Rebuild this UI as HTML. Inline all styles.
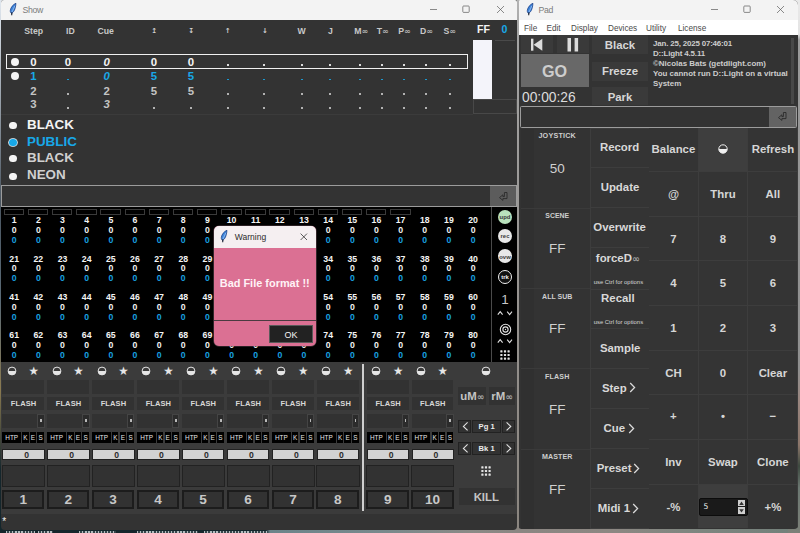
<!DOCTYPE html>
<html><head><meta charset="utf-8"><title>D::Light</title>
<style>
html,body{margin:0;padding:0;}
body{width:800px;height:533px;overflow:hidden;position:relative;background:#5f665f;font-family:"Liberation Sans",sans-serif;font-weight:bold;}
div,svg.ab{position:absolute;box-sizing:border-box;}
.t{width:120px;height:20px;line-height:20px;text-align:center;white-space:nowrap;}
.tl{height:20px;line-height:20px;white-space:nowrap;}
.seg{font-family:"Liberation Sans",sans-serif;font-weight:normal;}
</style></head><body>

<div style="left:0px;top:500px;width:520px;height:33px;background:linear-gradient(90deg,#14262c 0,#14262c 266px,#6c848a 270px,#78898c 380px,#8a8a86 470px,#8b8682 520px);"></div>
<div style="left:517px;top:500px;width:283px;height:33px;background:linear-gradient(90deg,#8b8682 0,#8c8782 35%,#7f8680 60%,#72807a 100%);"></div>
<div style="left:788px;top:0px;width:12px;height:533px;background:linear-gradient(180deg,#e9e9e9 0,#e4e4e4 34px,#9a9a9a 40px,#8f8f8f 370px,#9a8680 400px,#8c766a 445px,#3e4a40 466px,#6c7872 488px,#7c8078 533px);"></div>
<div style="left:0px;top:0px;width:8px;height:533px;background:linear-gradient(180deg,#dfe6ee 0,#cfd6de 30px,#4a5560 200px,#5a6a76 300px,#8a7a50 390px,#14262c 470px);"></div>
<div style="left:6px;top:530.6px;width:29px;height:3px;background:repeating-linear-gradient(90deg,rgba(230,238,240,.75) 0,rgba(230,238,240,.75) 1.3px,rgba(230,238,240,.15) 1.3px,rgba(230,238,240,.15) 3.1px);"></div>
<div style="left:38px;top:530.6px;width:15px;height:3px;background:repeating-linear-gradient(90deg,rgba(230,238,240,.75) 0,rgba(230,238,240,.75) 1.3px,rgba(230,238,240,.15) 1.3px,rgba(230,238,240,.15) 3.1px);"></div>
<div style="left:79px;top:530.6px;width:37px;height:3px;background:repeating-linear-gradient(90deg,rgba(230,238,240,.75) 0,rgba(230,238,240,.75) 1.3px,rgba(230,238,240,.15) 1.3px,rgba(230,238,240,.15) 3.1px);"></div>
<div style="left:137px;top:530.6px;width:61px;height:3px;background:repeating-linear-gradient(90deg,rgba(230,238,240,.75) 0,rgba(230,238,240,.75) 1.3px,rgba(230,238,240,.15) 1.3px,rgba(230,238,240,.15) 3.1px);"></div>
<div style="left:204px;top:530.6px;width:63px;height:3px;background:repeating-linear-gradient(90deg,rgba(230,238,240,.75) 0,rgba(230,238,240,.75) 1.3px,rgba(230,238,240,.15) 1.3px,rgba(230,238,240,.15) 3.1px);"></div>
<div style="left:1px;top:0;width:516px;height:529.6px;background:#333;border-radius:3px 2px 4px 4px;overflow:hidden;">
<div style="left:0px;top:0px;width:516px;height:20.1px;background:#f3f3f3;"></div>
<svg class="ab" style="left:8px;top:3px" width="9" height="13" viewBox="0 0 9 13"><path d="M6.9 0.3C4.2 1.4 1.6 4.4 1.3 7.6C1.2 9 1.8 10 2.6 10.4C4.6 9.2 6.6 6.4 6.9 0.3Z" fill="#3f86dc" stroke="#1c3f86" stroke-width="0.8"/><path d="M2.9 9.2L5.8 3" stroke="#a9c9f2" stroke-width="0.7" fill="none"/><path d="M2.9 9.4L2.7 12.2" stroke="#101828" stroke-width="1.1" fill="none"/></svg>
<div class="tl" style="left:21.4px;top:0.25px;font-size:8.7px;color:#7c7c7c;font-weight:normal;letter-spacing:-0.3px;">Show</div>
<svg class="ab" style="left:420px;top:0" width="96" height="20" viewBox="0 0 96 20"><g stroke="#5a5a5a" stroke-width="0.7" fill="none"><path d="M9 9.5h7"/><rect x="41.8" y="6" width="6.4" height="6.4" rx="0.8"/><path d="M76 6l7 7M83 6l-7 7"/></g></svg>
<div class="t" style="left:-27.30px;top:21.25px;font-size:8.7px;color:#c8c8c8;">Step</div>
<div class="t" style="left:9.40px;top:21.25px;font-size:8.7px;color:#c8c8c8;">ID</div>
<div class="t" style="left:44.70px;top:21.25px;font-size:8.7px;color:#c8c8c8;">Cue</div>
<div class="t" style="left:93.30px;top:21.25px;font-size:7px;color:#d4d4d4;font-family:'DejaVu Sans',sans-serif;">↥</div>
<div class="t" style="left:130.30px;top:21.25px;font-size:7px;color:#d4d4d4;font-family:'DejaVu Sans',sans-serif;">↧</div>
<div class="t" style="left:166.70px;top:21.25px;font-size:7px;color:#d4d4d4;font-family:'DejaVu Sans',sans-serif;">↑</div>
<div class="t" style="left:204.00px;top:21.25px;font-size:7px;color:#d4d4d4;font-family:'DejaVu Sans',sans-serif;">↓</div>
<div class="t" style="left:240.50px;top:21.25px;font-size:8.7px;color:#c8c8c8;">W</div>
<div class="t" style="left:269.50px;top:21.25px;font-size:8.7px;color:#c8c8c8;">J</div>
<div class="t" style="left:300.30px;top:21.25px;font-size:8.7px;color:#c8c8c8;">M<span style="font-size:8px;font-weight:bold;font-family:'DejaVu Sans',sans-serif;color:#b4b4b4;position:relative;top:-0.4px">∞</span></div>
<div class="t" style="left:321.80px;top:21.25px;font-size:8.7px;color:#c8c8c8;">T<span style="font-size:8px;font-weight:bold;font-family:'DejaVu Sans',sans-serif;color:#b4b4b4;position:relative;top:-0.4px">∞</span></div>
<div class="t" style="left:343.50px;top:21.25px;font-size:8.7px;color:#c8c8c8;">P<span style="font-size:8px;font-weight:bold;font-family:'DejaVu Sans',sans-serif;color:#b4b4b4;position:relative;top:-0.4px">∞</span></div>
<div class="t" style="left:365.50px;top:21.25px;font-size:8.7px;color:#c8c8c8;">D<span style="font-size:8px;font-weight:bold;font-family:'DejaVu Sans',sans-serif;color:#b4b4b4;position:relative;top:-0.4px">∞</span></div>
<div class="t" style="left:388.80px;top:21.25px;font-size:8.7px;color:#c8c8c8;">S<span style="font-size:8px;font-weight:bold;font-family:'DejaVu Sans',sans-serif;color:#b4b4b4;position:relative;top:-0.4px">∞</span></div>
<div class="t" style="left:422.50px;top:19.25px;font-size:10.6px;color:#f4f4f4;">FF</div>
<div class="t" style="left:443.50px;top:19.25px;font-size:10.6px;color:#18a8e8;">0</div>
<div class="t" style="left:-27.50px;top:52.25px;font-size:11.4px;color:#f4f4f4;">0</div>
<div class="t" style="left:7.00px;top:52.25px;font-size:11.4px;color:#f4f4f4;">0</div>
<div class="t" style="left:45.60px;top:52.25px;font-size:11.4px;color:#f4f4f4;font-style:italic;">0</div>
<div class="t" style="left:93.00px;top:52.25px;font-size:11.4px;color:#f4f4f4;">0</div>
<div class="t" style="left:130.00px;top:52.25px;font-size:11.4px;color:#f4f4f4;">0</div>
<div style="left:226.25px;top:64.35px;width:1.5px;height:1.5px;background:#f4f4f4;opacity:.88;"></div>
<div style="left:262.25px;top:64.35px;width:1.5px;height:1.5px;background:#f4f4f4;opacity:.88;"></div>
<div style="left:300.25px;top:64.35px;width:1.5px;height:1.5px;background:#f4f4f4;opacity:.88;"></div>
<div style="left:328.25px;top:64.35px;width:1.5px;height:1.5px;background:#f4f4f4;opacity:.88;"></div>
<div style="left:358.25px;top:64.35px;width:1.5px;height:1.5px;background:#f4f4f4;opacity:.88;"></div>
<div style="left:380.25px;top:64.35px;width:1.5px;height:1.5px;background:#f4f4f4;opacity:.88;"></div>
<div style="left:402.25px;top:64.35px;width:1.5px;height:1.5px;background:#f4f4f4;opacity:.88;"></div>
<div style="left:424.25px;top:64.35px;width:1.5px;height:1.5px;background:#f4f4f4;opacity:.88;"></div>
<div style="left:448.25px;top:64.35px;width:1.5px;height:1.5px;background:#f4f4f4;opacity:.88;"></div>
<div class="t" style="left:-27.50px;top:66.25px;font-size:11.4px;color:#18a8e8;">1</div>
<div style="left:66.25px;top:78.75px;width:1.5px;height:1.5px;background:#18a8e8;opacity:.88;"></div>
<div class="t" style="left:45.60px;top:66.25px;font-size:11.4px;color:#18a8e8;font-style:italic;">0</div>
<div class="t" style="left:93.00px;top:66.25px;font-size:11.4px;color:#18a8e8;">5</div>
<div class="t" style="left:130.00px;top:66.25px;font-size:11.4px;color:#18a8e8;">5</div>
<div style="left:226.25px;top:78.75px;width:1.5px;height:1.5px;background:#18a8e8;opacity:.88;"></div>
<div style="left:262.25px;top:78.75px;width:1.5px;height:1.5px;background:#18a8e8;opacity:.88;"></div>
<div style="left:300.25px;top:78.75px;width:1.5px;height:1.5px;background:#18a8e8;opacity:.88;"></div>
<div style="left:328.25px;top:78.75px;width:1.5px;height:1.5px;background:#18a8e8;opacity:.88;"></div>
<div style="left:358.25px;top:78.75px;width:1.5px;height:1.5px;background:#18a8e8;opacity:.88;"></div>
<div style="left:380.25px;top:78.75px;width:1.5px;height:1.5px;background:#18a8e8;opacity:.88;"></div>
<div style="left:402.25px;top:78.75px;width:1.5px;height:1.5px;background:#18a8e8;opacity:.88;"></div>
<div style="left:424.25px;top:78.75px;width:1.5px;height:1.5px;background:#18a8e8;opacity:.88;"></div>
<div style="left:448.25px;top:78.75px;width:1.5px;height:1.5px;background:#18a8e8;opacity:.88;"></div>
<div class="t" style="left:-27.50px;top:81.25px;font-size:11.4px;color:#c4c4c4;">2</div>
<div style="left:66.25px;top:93.05px;width:1.5px;height:1.5px;background:#c4c4c4;opacity:.88;"></div>
<div class="t" style="left:45.60px;top:81.25px;font-size:11.4px;color:#c4c4c4;">2</div>
<div class="t" style="left:93.00px;top:81.25px;font-size:11.4px;color:#c4c4c4;">5</div>
<div class="t" style="left:130.00px;top:81.25px;font-size:11.4px;color:#c4c4c4;">5</div>
<div style="left:226.25px;top:93.05px;width:1.5px;height:1.5px;background:#c4c4c4;opacity:.88;"></div>
<div style="left:262.25px;top:93.05px;width:1.5px;height:1.5px;background:#c4c4c4;opacity:.88;"></div>
<div style="left:300.25px;top:93.05px;width:1.5px;height:1.5px;background:#c4c4c4;opacity:.88;"></div>
<div style="left:328.25px;top:93.05px;width:1.5px;height:1.5px;background:#c4c4c4;opacity:.88;"></div>
<div style="left:358.25px;top:93.05px;width:1.5px;height:1.5px;background:#c4c4c4;opacity:.88;"></div>
<div style="left:380.25px;top:93.05px;width:1.5px;height:1.5px;background:#c4c4c4;opacity:.88;"></div>
<div style="left:402.25px;top:93.05px;width:1.5px;height:1.5px;background:#c4c4c4;opacity:.88;"></div>
<div style="left:424.25px;top:93.05px;width:1.5px;height:1.5px;background:#c4c4c4;opacity:.88;"></div>
<div style="left:448.25px;top:93.05px;width:1.5px;height:1.5px;background:#c4c4c4;opacity:.88;"></div>
<div class="t" style="left:-27.50px;top:94.25px;font-size:11.4px;color:#c4c4c4;">3</div>
<div style="left:66.25px;top:107.25px;width:1.5px;height:1.5px;background:#c4c4c4;opacity:.88;"></div>
<div class="t" style="left:45.60px;top:94.25px;font-size:11.4px;color:#c4c4c4;font-style:italic;">3</div>
<div style="left:152.25px;top:107.25px;width:1.5px;height:1.5px;background:#c4c4c4;opacity:.88;"></div>
<div style="left:189.25px;top:107.25px;width:1.5px;height:1.5px;background:#c4c4c4;opacity:.88;"></div>
<div style="left:226.25px;top:107.25px;width:1.5px;height:1.5px;background:#c4c4c4;opacity:.88;"></div>
<div style="left:262.25px;top:107.25px;width:1.5px;height:1.5px;background:#c4c4c4;opacity:.88;"></div>
<div style="left:300.25px;top:107.25px;width:1.5px;height:1.5px;background:#c4c4c4;opacity:.88;"></div>
<div style="left:328.25px;top:107.25px;width:1.5px;height:1.5px;background:#c4c4c4;opacity:.88;"></div>
<div style="left:358.25px;top:107.25px;width:1.5px;height:1.5px;background:#c4c4c4;opacity:.88;"></div>
<div style="left:380.25px;top:107.25px;width:1.5px;height:1.5px;background:#c4c4c4;opacity:.88;"></div>
<div style="left:402.25px;top:107.25px;width:1.5px;height:1.5px;background:#c4c4c4;opacity:.88;"></div>
<div style="left:424.25px;top:107.25px;width:1.5px;height:1.5px;background:#c4c4c4;opacity:.88;"></div>
<div style="left:448.25px;top:107.25px;width:1.5px;height:1.5px;background:#c4c4c4;opacity:.88;"></div>
<div style="left:5px;top:54px;width:462px;height:15px;border:1px solid #f0f0f0;"></div>
<div style="left:9.7px;top:57.7px;width:8px;height:8px;background:#f4f4f4;border-radius:50%;"></div>
<div style="left:9.7px;top:72.2px;width:8px;height:8px;background:#f4f4f4;border-radius:50%;"></div>
<div style="left:472.4px;top:40px;width:19.1px;height:58.5px;background:#f4f4fa;"></div>
<div style="left:493.5px;top:40px;width:20px;height:1px;background:#4a4a4a;"></div>
<div style="left:472px;top:99px;width:44px;height:14.5px;border:1px solid #484848;"></div>
<div style="left:0px;top:113.5px;width:472px;height:1px;background:#3b3b3b;"></div>
<div class="tl" style="left:26px;top:114.75px;font-size:13.4px;color:#f4f4f4;">BLACK</div>
<div style="left:8.3px;top:122.10000000000001px;width:7.4px;height:7.4px;background:#f4f4f4;border-radius:50%;"></div>
<div class="tl" style="left:26px;top:131.75px;font-size:13.4px;color:#18a8e8;">PUBLIC</div>
<div style="left:8.3px;top:139.1px;width:7.4px;height:7.4px;background:#18a8e8;border-radius:50%;box-shadow:0 0 0 0.8px #e8f4fa;"></div>
<div class="tl" style="left:26px;top:147.75px;font-size:13.4px;color:#d0d0d0;">BLACK</div>
<div style="left:8.3px;top:155.1px;width:7.4px;height:7.4px;background:#f4f4f4;border-radius:50%;"></div>
<div class="tl" style="left:26px;top:164.75px;font-size:13.4px;color:#d0d0d0;">NEON</div>
<div style="left:8.3px;top:172.6px;width:7.4px;height:7.4px;background:#f4f4f4;border-radius:50%;"></div>
<div style="left:0px;top:185px;width:516px;height:21.5px;background:#333;border:1px solid #9c9c9c;"></div>
<div style="left:488.6px;top:186px;width:26.4px;height:19.5px;background:#5c5c5c;"></div>
<svg class="ab" style="left:498.3px;top:191.6px" width="9" height="9" viewBox="0 0 9 9"><path d="M5.4 0.5H8V6.6H3.9V8.4L0.5 5.6L3.9 2.8V4.6H5.4Z" fill="none" stroke="#2a2a2a" stroke-width="0.9" stroke-linejoin="round"/></svg>
<div style="left:0px;top:206.5px;width:516px;height:155.5px;background:#000;"></div>
<div style="left:490.3px;top:206.5px;width:1px;height:155.5px;background:#4a4a4a;"></div>
<div style="left:2.8px;top:208.7px;width:20.4px;height:6.2px;border:1px solid #3a3a3a;"></div>
<div style="left:26.95px;top:208.7px;width:20.4px;height:6.2px;border:1px solid #3a3a3a;"></div>
<div style="left:51.099999999999994px;top:208.7px;width:20.4px;height:6.2px;border:1px solid #3a3a3a;"></div>
<div style="left:75.24999999999999px;top:208.7px;width:20.4px;height:6.2px;border:1px solid #3a3a3a;"></div>
<div style="left:99.39999999999999px;top:208.7px;width:20.4px;height:6.2px;border:1px solid #3a3a3a;"></div>
<div style="left:123.55px;top:208.7px;width:20.4px;height:6.2px;border:1px solid #3a3a3a;"></div>
<div style="left:147.7px;top:208.7px;width:20.4px;height:6.2px;border:1px solid #3a3a3a;"></div>
<div style="left:171.85px;top:208.7px;width:20.4px;height:6.2px;border:1px solid #3a3a3a;"></div>
<div style="left:196.0px;top:208.7px;width:20.4px;height:6.2px;border:1px solid #3a3a3a;"></div>
<div style="left:220.15px;top:208.7px;width:20.4px;height:6.2px;border:1px solid #3a3a3a;"></div>
<div style="left:244.3px;top:208.7px;width:20.4px;height:6.2px;border:1px solid #3a3a3a;"></div>
<div style="left:268.45px;top:208.7px;width:20.4px;height:6.2px;border:1px solid #3a3a3a;"></div>
<div style="left:292.59999999999997px;top:208.7px;width:20.4px;height:6.2px;border:1px solid #3a3a3a;"></div>
<div style="left:316.75px;top:208.7px;width:20.4px;height:6.2px;border:1px solid #3a3a3a;"></div>
<div style="left:340.9px;top:208.7px;width:20.4px;height:6.2px;border:1px solid #3a3a3a;"></div>
<div style="left:365.05px;top:208.7px;width:20.4px;height:6.2px;border:1px solid #3a3a3a;"></div>
<div style="left:389.2px;top:208.7px;width:20.4px;height:6.2px;border:1px solid #3a3a3a;"></div>
<div class="t" style="left:-46.80px;top:210.25px;font-size:8.7px;color:#f4f4f4;">1</div>
<div class="t" style="left:-46.80px;top:220.25px;font-size:8.7px;color:#f4f4f4;">0</div>
<div class="t" style="left:-46.80px;top:230.25px;font-size:8.7px;color:#18a0e0;">0</div>
<div class="t" style="left:-22.65px;top:210.25px;font-size:8.7px;color:#f4f4f4;">2</div>
<div class="t" style="left:-22.65px;top:220.25px;font-size:8.7px;color:#f4f4f4;">0</div>
<div class="t" style="left:-22.65px;top:230.25px;font-size:8.7px;color:#18a0e0;">0</div>
<div class="t" style="left:1.50px;top:210.25px;font-size:8.7px;color:#f4f4f4;">3</div>
<div class="t" style="left:1.50px;top:220.25px;font-size:8.7px;color:#f4f4f4;">0</div>
<div class="t" style="left:1.50px;top:230.25px;font-size:8.7px;color:#18a0e0;">0</div>
<div class="t" style="left:25.65px;top:210.25px;font-size:8.7px;color:#f4f4f4;">4</div>
<div class="t" style="left:25.65px;top:220.25px;font-size:8.7px;color:#f4f4f4;">0</div>
<div class="t" style="left:25.65px;top:230.25px;font-size:8.7px;color:#18a0e0;">0</div>
<div class="t" style="left:49.80px;top:210.25px;font-size:8.7px;color:#f4f4f4;">5</div>
<div class="t" style="left:49.80px;top:220.25px;font-size:8.7px;color:#f4f4f4;">0</div>
<div class="t" style="left:49.80px;top:230.25px;font-size:8.7px;color:#18a0e0;">0</div>
<div class="t" style="left:73.95px;top:210.25px;font-size:8.7px;color:#f4f4f4;">6</div>
<div class="t" style="left:73.95px;top:220.25px;font-size:8.7px;color:#f4f4f4;">0</div>
<div class="t" style="left:73.95px;top:230.25px;font-size:8.7px;color:#18a0e0;">0</div>
<div class="t" style="left:98.10px;top:210.25px;font-size:8.7px;color:#f4f4f4;">7</div>
<div class="t" style="left:98.10px;top:220.25px;font-size:8.7px;color:#f4f4f4;">0</div>
<div class="t" style="left:98.10px;top:230.25px;font-size:8.7px;color:#18a0e0;">0</div>
<div class="t" style="left:122.25px;top:210.25px;font-size:8.7px;color:#f4f4f4;">8</div>
<div class="t" style="left:122.25px;top:220.25px;font-size:8.7px;color:#f4f4f4;">0</div>
<div class="t" style="left:122.25px;top:230.25px;font-size:8.7px;color:#18a0e0;">0</div>
<div class="t" style="left:146.40px;top:210.25px;font-size:8.7px;color:#f4f4f4;">9</div>
<div class="t" style="left:146.40px;top:220.25px;font-size:8.7px;color:#f4f4f4;">0</div>
<div class="t" style="left:146.40px;top:230.25px;font-size:8.7px;color:#18a0e0;">0</div>
<div class="t" style="left:170.55px;top:210.25px;font-size:8.7px;color:#f4f4f4;">10</div>
<div class="t" style="left:170.55px;top:220.25px;font-size:8.7px;color:#f4f4f4;">0</div>
<div class="t" style="left:170.55px;top:230.25px;font-size:8.7px;color:#18a0e0;">0</div>
<div class="t" style="left:194.70px;top:210.25px;font-size:8.7px;color:#f4f4f4;">11</div>
<div class="t" style="left:194.70px;top:220.25px;font-size:8.7px;color:#f4f4f4;">0</div>
<div class="t" style="left:194.70px;top:230.25px;font-size:8.7px;color:#18a0e0;">0</div>
<div class="t" style="left:218.85px;top:210.25px;font-size:8.7px;color:#f4f4f4;">12</div>
<div class="t" style="left:218.85px;top:220.25px;font-size:8.7px;color:#f4f4f4;">0</div>
<div class="t" style="left:218.85px;top:230.25px;font-size:8.7px;color:#18a0e0;">0</div>
<div class="t" style="left:243.00px;top:210.25px;font-size:8.7px;color:#f4f4f4;">13</div>
<div class="t" style="left:243.00px;top:220.25px;font-size:8.7px;color:#f4f4f4;">0</div>
<div class="t" style="left:243.00px;top:230.25px;font-size:8.7px;color:#18a0e0;">0</div>
<div class="t" style="left:267.15px;top:210.25px;font-size:8.7px;color:#f4f4f4;">14</div>
<div class="t" style="left:267.15px;top:220.25px;font-size:8.7px;color:#f4f4f4;">0</div>
<div class="t" style="left:267.15px;top:230.25px;font-size:8.7px;color:#18a0e0;">0</div>
<div class="t" style="left:291.30px;top:210.25px;font-size:8.7px;color:#f4f4f4;">15</div>
<div class="t" style="left:291.30px;top:220.25px;font-size:8.7px;color:#f4f4f4;">0</div>
<div class="t" style="left:291.30px;top:230.25px;font-size:8.7px;color:#18a0e0;">0</div>
<div class="t" style="left:315.45px;top:210.25px;font-size:8.7px;color:#f4f4f4;">16</div>
<div class="t" style="left:315.45px;top:220.25px;font-size:8.7px;color:#f4f4f4;">0</div>
<div class="t" style="left:315.45px;top:230.25px;font-size:8.7px;color:#18a0e0;">0</div>
<div class="t" style="left:339.60px;top:210.25px;font-size:8.7px;color:#f4f4f4;">17</div>
<div class="t" style="left:339.60px;top:220.25px;font-size:8.7px;color:#f4f4f4;">0</div>
<div class="t" style="left:339.60px;top:230.25px;font-size:8.7px;color:#18a0e0;">0</div>
<div class="t" style="left:363.75px;top:210.25px;font-size:8.7px;color:#f4f4f4;">18</div>
<div class="t" style="left:363.75px;top:220.25px;font-size:8.7px;color:#f4f4f4;">0</div>
<div class="t" style="left:363.75px;top:230.25px;font-size:8.7px;color:#18a0e0;">0</div>
<div class="t" style="left:387.90px;top:210.25px;font-size:8.7px;color:#f4f4f4;">19</div>
<div class="t" style="left:387.90px;top:220.25px;font-size:8.7px;color:#f4f4f4;">0</div>
<div class="t" style="left:387.90px;top:230.25px;font-size:8.7px;color:#18a0e0;">0</div>
<div class="t" style="left:412.05px;top:210.25px;font-size:8.7px;color:#f4f4f4;">20</div>
<div class="t" style="left:412.05px;top:220.25px;font-size:8.7px;color:#f4f4f4;">0</div>
<div class="t" style="left:412.05px;top:230.25px;font-size:8.7px;color:#18a0e0;">0</div>
<div class="t" style="left:-46.80px;top:249.25px;font-size:8.7px;color:#f4f4f4;">21</div>
<div class="t" style="left:-46.80px;top:258.25px;font-size:8.7px;color:#f4f4f4;">0</div>
<div class="t" style="left:-46.80px;top:268.25px;font-size:8.7px;color:#18a0e0;">0</div>
<div class="t" style="left:-22.65px;top:249.25px;font-size:8.7px;color:#f4f4f4;">22</div>
<div class="t" style="left:-22.65px;top:258.25px;font-size:8.7px;color:#f4f4f4;">0</div>
<div class="t" style="left:-22.65px;top:268.25px;font-size:8.7px;color:#18a0e0;">0</div>
<div class="t" style="left:1.50px;top:249.25px;font-size:8.7px;color:#f4f4f4;">23</div>
<div class="t" style="left:1.50px;top:258.25px;font-size:8.7px;color:#f4f4f4;">0</div>
<div class="t" style="left:1.50px;top:268.25px;font-size:8.7px;color:#18a0e0;">0</div>
<div class="t" style="left:25.65px;top:249.25px;font-size:8.7px;color:#f4f4f4;">24</div>
<div class="t" style="left:25.65px;top:258.25px;font-size:8.7px;color:#f4f4f4;">0</div>
<div class="t" style="left:25.65px;top:268.25px;font-size:8.7px;color:#18a0e0;">0</div>
<div class="t" style="left:49.80px;top:249.25px;font-size:8.7px;color:#f4f4f4;">25</div>
<div class="t" style="left:49.80px;top:258.25px;font-size:8.7px;color:#f4f4f4;">0</div>
<div class="t" style="left:49.80px;top:268.25px;font-size:8.7px;color:#18a0e0;">0</div>
<div class="t" style="left:73.95px;top:249.25px;font-size:8.7px;color:#f4f4f4;">26</div>
<div class="t" style="left:73.95px;top:258.25px;font-size:8.7px;color:#f4f4f4;">0</div>
<div class="t" style="left:73.95px;top:268.25px;font-size:8.7px;color:#18a0e0;">0</div>
<div class="t" style="left:98.10px;top:249.25px;font-size:8.7px;color:#f4f4f4;">27</div>
<div class="t" style="left:98.10px;top:258.25px;font-size:8.7px;color:#f4f4f4;">0</div>
<div class="t" style="left:98.10px;top:268.25px;font-size:8.7px;color:#18a0e0;">0</div>
<div class="t" style="left:122.25px;top:249.25px;font-size:8.7px;color:#f4f4f4;">28</div>
<div class="t" style="left:122.25px;top:258.25px;font-size:8.7px;color:#f4f4f4;">0</div>
<div class="t" style="left:122.25px;top:268.25px;font-size:8.7px;color:#18a0e0;">0</div>
<div class="t" style="left:146.40px;top:249.25px;font-size:8.7px;color:#f4f4f4;">29</div>
<div class="t" style="left:146.40px;top:258.25px;font-size:8.7px;color:#f4f4f4;">0</div>
<div class="t" style="left:146.40px;top:268.25px;font-size:8.7px;color:#18a0e0;">0</div>
<div class="t" style="left:170.55px;top:249.25px;font-size:8.7px;color:#f4f4f4;">30</div>
<div class="t" style="left:170.55px;top:258.25px;font-size:8.7px;color:#f4f4f4;">0</div>
<div class="t" style="left:170.55px;top:268.25px;font-size:8.7px;color:#18a0e0;">0</div>
<div class="t" style="left:194.70px;top:249.25px;font-size:8.7px;color:#f4f4f4;">31</div>
<div class="t" style="left:194.70px;top:258.25px;font-size:8.7px;color:#f4f4f4;">0</div>
<div class="t" style="left:194.70px;top:268.25px;font-size:8.7px;color:#18a0e0;">0</div>
<div class="t" style="left:218.85px;top:249.25px;font-size:8.7px;color:#f4f4f4;">32</div>
<div class="t" style="left:218.85px;top:258.25px;font-size:8.7px;color:#f4f4f4;">0</div>
<div class="t" style="left:218.85px;top:268.25px;font-size:8.7px;color:#18a0e0;">0</div>
<div class="t" style="left:243.00px;top:249.25px;font-size:8.7px;color:#f4f4f4;">33</div>
<div class="t" style="left:243.00px;top:258.25px;font-size:8.7px;color:#f4f4f4;">0</div>
<div class="t" style="left:243.00px;top:268.25px;font-size:8.7px;color:#18a0e0;">0</div>
<div class="t" style="left:267.15px;top:249.25px;font-size:8.7px;color:#f4f4f4;">34</div>
<div class="t" style="left:267.15px;top:258.25px;font-size:8.7px;color:#f4f4f4;">0</div>
<div class="t" style="left:267.15px;top:268.25px;font-size:8.7px;color:#18a0e0;">0</div>
<div class="t" style="left:291.30px;top:249.25px;font-size:8.7px;color:#f4f4f4;">35</div>
<div class="t" style="left:291.30px;top:258.25px;font-size:8.7px;color:#f4f4f4;">0</div>
<div class="t" style="left:291.30px;top:268.25px;font-size:8.7px;color:#18a0e0;">0</div>
<div class="t" style="left:315.45px;top:249.25px;font-size:8.7px;color:#f4f4f4;">36</div>
<div class="t" style="left:315.45px;top:258.25px;font-size:8.7px;color:#f4f4f4;">0</div>
<div class="t" style="left:315.45px;top:268.25px;font-size:8.7px;color:#18a0e0;">0</div>
<div class="t" style="left:339.60px;top:249.25px;font-size:8.7px;color:#f4f4f4;">37</div>
<div class="t" style="left:339.60px;top:258.25px;font-size:8.7px;color:#f4f4f4;">0</div>
<div class="t" style="left:339.60px;top:268.25px;font-size:8.7px;color:#18a0e0;">0</div>
<div class="t" style="left:363.75px;top:249.25px;font-size:8.7px;color:#f4f4f4;">38</div>
<div class="t" style="left:363.75px;top:258.25px;font-size:8.7px;color:#f4f4f4;">0</div>
<div class="t" style="left:363.75px;top:268.25px;font-size:8.7px;color:#18a0e0;">0</div>
<div class="t" style="left:387.90px;top:249.25px;font-size:8.7px;color:#f4f4f4;">39</div>
<div class="t" style="left:387.90px;top:258.25px;font-size:8.7px;color:#f4f4f4;">0</div>
<div class="t" style="left:387.90px;top:268.25px;font-size:8.7px;color:#18a0e0;">0</div>
<div class="t" style="left:412.05px;top:249.25px;font-size:8.7px;color:#f4f4f4;">40</div>
<div class="t" style="left:412.05px;top:258.25px;font-size:8.7px;color:#f4f4f4;">0</div>
<div class="t" style="left:412.05px;top:268.25px;font-size:8.7px;color:#18a0e0;">0</div>
<div class="t" style="left:-46.80px;top:287.25px;font-size:8.7px;color:#f4f4f4;">41</div>
<div class="t" style="left:-46.80px;top:297.25px;font-size:8.7px;color:#f4f4f4;">0</div>
<div class="t" style="left:-46.80px;top:307.25px;font-size:8.7px;color:#18a0e0;">0</div>
<div class="t" style="left:-22.65px;top:287.25px;font-size:8.7px;color:#f4f4f4;">42</div>
<div class="t" style="left:-22.65px;top:297.25px;font-size:8.7px;color:#f4f4f4;">0</div>
<div class="t" style="left:-22.65px;top:307.25px;font-size:8.7px;color:#18a0e0;">0</div>
<div class="t" style="left:1.50px;top:287.25px;font-size:8.7px;color:#f4f4f4;">43</div>
<div class="t" style="left:1.50px;top:297.25px;font-size:8.7px;color:#f4f4f4;">0</div>
<div class="t" style="left:1.50px;top:307.25px;font-size:8.7px;color:#18a0e0;">0</div>
<div class="t" style="left:25.65px;top:287.25px;font-size:8.7px;color:#f4f4f4;">44</div>
<div class="t" style="left:25.65px;top:297.25px;font-size:8.7px;color:#f4f4f4;">0</div>
<div class="t" style="left:25.65px;top:307.25px;font-size:8.7px;color:#18a0e0;">0</div>
<div class="t" style="left:49.80px;top:287.25px;font-size:8.7px;color:#f4f4f4;">45</div>
<div class="t" style="left:49.80px;top:297.25px;font-size:8.7px;color:#f4f4f4;">0</div>
<div class="t" style="left:49.80px;top:307.25px;font-size:8.7px;color:#18a0e0;">0</div>
<div class="t" style="left:73.95px;top:287.25px;font-size:8.7px;color:#f4f4f4;">46</div>
<div class="t" style="left:73.95px;top:297.25px;font-size:8.7px;color:#f4f4f4;">0</div>
<div class="t" style="left:73.95px;top:307.25px;font-size:8.7px;color:#18a0e0;">0</div>
<div class="t" style="left:98.10px;top:287.25px;font-size:8.7px;color:#f4f4f4;">47</div>
<div class="t" style="left:98.10px;top:297.25px;font-size:8.7px;color:#f4f4f4;">0</div>
<div class="t" style="left:98.10px;top:307.25px;font-size:8.7px;color:#18a0e0;">0</div>
<div class="t" style="left:122.25px;top:287.25px;font-size:8.7px;color:#f4f4f4;">48</div>
<div class="t" style="left:122.25px;top:297.25px;font-size:8.7px;color:#f4f4f4;">0</div>
<div class="t" style="left:122.25px;top:307.25px;font-size:8.7px;color:#18a0e0;">0</div>
<div class="t" style="left:146.40px;top:287.25px;font-size:8.7px;color:#f4f4f4;">49</div>
<div class="t" style="left:146.40px;top:297.25px;font-size:8.7px;color:#f4f4f4;">0</div>
<div class="t" style="left:146.40px;top:307.25px;font-size:8.7px;color:#18a0e0;">0</div>
<div class="t" style="left:170.55px;top:287.25px;font-size:8.7px;color:#f4f4f4;">50</div>
<div class="t" style="left:170.55px;top:297.25px;font-size:8.7px;color:#f4f4f4;">0</div>
<div class="t" style="left:170.55px;top:307.25px;font-size:8.7px;color:#18a0e0;">0</div>
<div class="t" style="left:194.70px;top:287.25px;font-size:8.7px;color:#f4f4f4;">51</div>
<div class="t" style="left:194.70px;top:297.25px;font-size:8.7px;color:#f4f4f4;">0</div>
<div class="t" style="left:194.70px;top:307.25px;font-size:8.7px;color:#18a0e0;">0</div>
<div class="t" style="left:218.85px;top:287.25px;font-size:8.7px;color:#f4f4f4;">52</div>
<div class="t" style="left:218.85px;top:297.25px;font-size:8.7px;color:#f4f4f4;">0</div>
<div class="t" style="left:218.85px;top:307.25px;font-size:8.7px;color:#18a0e0;">0</div>
<div class="t" style="left:243.00px;top:287.25px;font-size:8.7px;color:#f4f4f4;">53</div>
<div class="t" style="left:243.00px;top:297.25px;font-size:8.7px;color:#f4f4f4;">0</div>
<div class="t" style="left:243.00px;top:307.25px;font-size:8.7px;color:#18a0e0;">0</div>
<div class="t" style="left:267.15px;top:287.25px;font-size:8.7px;color:#f4f4f4;">54</div>
<div class="t" style="left:267.15px;top:297.25px;font-size:8.7px;color:#f4f4f4;">0</div>
<div class="t" style="left:267.15px;top:307.25px;font-size:8.7px;color:#18a0e0;">0</div>
<div class="t" style="left:291.30px;top:287.25px;font-size:8.7px;color:#f4f4f4;">55</div>
<div class="t" style="left:291.30px;top:297.25px;font-size:8.7px;color:#f4f4f4;">0</div>
<div class="t" style="left:291.30px;top:307.25px;font-size:8.7px;color:#18a0e0;">0</div>
<div class="t" style="left:315.45px;top:287.25px;font-size:8.7px;color:#f4f4f4;">56</div>
<div class="t" style="left:315.45px;top:297.25px;font-size:8.7px;color:#f4f4f4;">0</div>
<div class="t" style="left:315.45px;top:307.25px;font-size:8.7px;color:#18a0e0;">0</div>
<div class="t" style="left:339.60px;top:287.25px;font-size:8.7px;color:#f4f4f4;">57</div>
<div class="t" style="left:339.60px;top:297.25px;font-size:8.7px;color:#f4f4f4;">0</div>
<div class="t" style="left:339.60px;top:307.25px;font-size:8.7px;color:#18a0e0;">0</div>
<div class="t" style="left:363.75px;top:287.25px;font-size:8.7px;color:#f4f4f4;">58</div>
<div class="t" style="left:363.75px;top:297.25px;font-size:8.7px;color:#f4f4f4;">0</div>
<div class="t" style="left:363.75px;top:307.25px;font-size:8.7px;color:#18a0e0;">0</div>
<div class="t" style="left:387.90px;top:287.25px;font-size:8.7px;color:#f4f4f4;">59</div>
<div class="t" style="left:387.90px;top:297.25px;font-size:8.7px;color:#f4f4f4;">0</div>
<div class="t" style="left:387.90px;top:307.25px;font-size:8.7px;color:#18a0e0;">0</div>
<div class="t" style="left:412.05px;top:287.25px;font-size:8.7px;color:#f4f4f4;">60</div>
<div class="t" style="left:412.05px;top:297.25px;font-size:8.7px;color:#f4f4f4;">0</div>
<div class="t" style="left:412.05px;top:307.25px;font-size:8.7px;color:#18a0e0;">0</div>
<div class="t" style="left:-46.80px;top:325.25px;font-size:8.7px;color:#f4f4f4;">61</div>
<div class="t" style="left:-46.80px;top:335.25px;font-size:8.7px;color:#f4f4f4;">0</div>
<div class="t" style="left:-46.80px;top:345.25px;font-size:8.7px;color:#18a0e0;">0</div>
<div class="t" style="left:-22.65px;top:325.25px;font-size:8.7px;color:#f4f4f4;">62</div>
<div class="t" style="left:-22.65px;top:335.25px;font-size:8.7px;color:#f4f4f4;">0</div>
<div class="t" style="left:-22.65px;top:345.25px;font-size:8.7px;color:#18a0e0;">0</div>
<div class="t" style="left:1.50px;top:325.25px;font-size:8.7px;color:#f4f4f4;">63</div>
<div class="t" style="left:1.50px;top:335.25px;font-size:8.7px;color:#f4f4f4;">0</div>
<div class="t" style="left:1.50px;top:345.25px;font-size:8.7px;color:#18a0e0;">0</div>
<div class="t" style="left:25.65px;top:325.25px;font-size:8.7px;color:#f4f4f4;">64</div>
<div class="t" style="left:25.65px;top:335.25px;font-size:8.7px;color:#f4f4f4;">0</div>
<div class="t" style="left:25.65px;top:345.25px;font-size:8.7px;color:#18a0e0;">0</div>
<div class="t" style="left:49.80px;top:325.25px;font-size:8.7px;color:#f4f4f4;">65</div>
<div class="t" style="left:49.80px;top:335.25px;font-size:8.7px;color:#f4f4f4;">0</div>
<div class="t" style="left:49.80px;top:345.25px;font-size:8.7px;color:#18a0e0;">0</div>
<div class="t" style="left:73.95px;top:325.25px;font-size:8.7px;color:#f4f4f4;">66</div>
<div class="t" style="left:73.95px;top:335.25px;font-size:8.7px;color:#f4f4f4;">0</div>
<div class="t" style="left:73.95px;top:345.25px;font-size:8.7px;color:#18a0e0;">0</div>
<div class="t" style="left:98.10px;top:325.25px;font-size:8.7px;color:#f4f4f4;">67</div>
<div class="t" style="left:98.10px;top:335.25px;font-size:8.7px;color:#f4f4f4;">0</div>
<div class="t" style="left:98.10px;top:345.25px;font-size:8.7px;color:#18a0e0;">0</div>
<div class="t" style="left:122.25px;top:325.25px;font-size:8.7px;color:#f4f4f4;">68</div>
<div class="t" style="left:122.25px;top:335.25px;font-size:8.7px;color:#f4f4f4;">0</div>
<div class="t" style="left:122.25px;top:345.25px;font-size:8.7px;color:#18a0e0;">0</div>
<div class="t" style="left:146.40px;top:325.25px;font-size:8.7px;color:#f4f4f4;">69</div>
<div class="t" style="left:146.40px;top:335.25px;font-size:8.7px;color:#f4f4f4;">0</div>
<div class="t" style="left:146.40px;top:345.25px;font-size:8.7px;color:#18a0e0;">0</div>
<div class="t" style="left:170.55px;top:325.25px;font-size:8.7px;color:#f4f4f4;">70</div>
<div class="t" style="left:170.55px;top:335.25px;font-size:8.7px;color:#f4f4f4;">0</div>
<div class="t" style="left:170.55px;top:345.25px;font-size:8.7px;color:#18a0e0;">0</div>
<div class="t" style="left:194.70px;top:325.25px;font-size:8.7px;color:#f4f4f4;">71</div>
<div class="t" style="left:194.70px;top:335.25px;font-size:8.7px;color:#f4f4f4;">0</div>
<div class="t" style="left:194.70px;top:345.25px;font-size:8.7px;color:#18a0e0;">0</div>
<div class="t" style="left:218.85px;top:325.25px;font-size:8.7px;color:#f4f4f4;">72</div>
<div class="t" style="left:218.85px;top:335.25px;font-size:8.7px;color:#f4f4f4;">0</div>
<div class="t" style="left:218.85px;top:345.25px;font-size:8.7px;color:#18a0e0;">0</div>
<div class="t" style="left:243.00px;top:325.25px;font-size:8.7px;color:#f4f4f4;">73</div>
<div class="t" style="left:243.00px;top:335.25px;font-size:8.7px;color:#f4f4f4;">0</div>
<div class="t" style="left:243.00px;top:345.25px;font-size:8.7px;color:#18a0e0;">0</div>
<div class="t" style="left:267.15px;top:325.25px;font-size:8.7px;color:#f4f4f4;">74</div>
<div class="t" style="left:267.15px;top:335.25px;font-size:8.7px;color:#f4f4f4;">0</div>
<div class="t" style="left:267.15px;top:345.25px;font-size:8.7px;color:#18a0e0;">0</div>
<div class="t" style="left:291.30px;top:325.25px;font-size:8.7px;color:#f4f4f4;">75</div>
<div class="t" style="left:291.30px;top:335.25px;font-size:8.7px;color:#f4f4f4;">0</div>
<div class="t" style="left:291.30px;top:345.25px;font-size:8.7px;color:#18a0e0;">0</div>
<div class="t" style="left:315.45px;top:325.25px;font-size:8.7px;color:#f4f4f4;">76</div>
<div class="t" style="left:315.45px;top:335.25px;font-size:8.7px;color:#f4f4f4;">0</div>
<div class="t" style="left:315.45px;top:345.25px;font-size:8.7px;color:#18a0e0;">0</div>
<div class="t" style="left:339.60px;top:325.25px;font-size:8.7px;color:#f4f4f4;">77</div>
<div class="t" style="left:339.60px;top:335.25px;font-size:8.7px;color:#f4f4f4;">0</div>
<div class="t" style="left:339.60px;top:345.25px;font-size:8.7px;color:#18a0e0;">0</div>
<div class="t" style="left:363.75px;top:325.25px;font-size:8.7px;color:#f4f4f4;">78</div>
<div class="t" style="left:363.75px;top:335.25px;font-size:8.7px;color:#f4f4f4;">0</div>
<div class="t" style="left:363.75px;top:345.25px;font-size:8.7px;color:#18a0e0;">0</div>
<div class="t" style="left:387.90px;top:325.25px;font-size:8.7px;color:#f4f4f4;">79</div>
<div class="t" style="left:387.90px;top:335.25px;font-size:8.7px;color:#f4f4f4;">0</div>
<div class="t" style="left:387.90px;top:345.25px;font-size:8.7px;color:#18a0e0;">0</div>
<div class="t" style="left:412.05px;top:325.25px;font-size:8.7px;color:#f4f4f4;">80</div>
<div class="t" style="left:412.05px;top:335.25px;font-size:8.7px;color:#f4f4f4;">0</div>
<div class="t" style="left:412.05px;top:345.25px;font-size:8.7px;color:#18a0e0;">0</div>
<div style="left:497px;top:209.5px;width:14px;height:14px;background:#b9e2bd;border-radius:50%;"></div>
<div class="t" style="left:444.00px;top:207.25px;font-size:5.9px;color:#383838;">upd</div>
<div style="left:497px;top:229.2px;width:14px;height:14px;background:#e8e8e8;border-radius:50%;"></div>
<div class="t" style="left:444.00px;top:226.25px;font-size:5.9px;color:#383838;">rec</div>
<div style="left:497px;top:249.39999999999998px;width:14px;height:14px;background:#e8e8e8;border-radius:50%;"></div>
<div class="t" style="left:444.00px;top:247.25px;font-size:5.9px;color:#383838;">ovw</div>
<div style="left:497px;top:269.7px;width:14px;height:14px;background:#111;border-radius:50%;border:1.2px solid #f0f0f0;"></div>
<div class="t" style="left:444.00px;top:267.25px;font-size:5.9px;color:#f0f0f0;">trk</div>
<div class="t" style="left:444.00px;top:289.75px;font-size:13.4px;color:#c8c8c8;font-weight:normal;">1</div>
<svg class="ab" style="left:496.2px;top:310.2px" width="16" height="6" viewBox="0 0 16 6"><g stroke="#e0e0e0" stroke-width="1.1" fill="none"><path d="M0.8 4.6L3.2 1.6L5.6 4.6"/><path d="M10.2 1.6L12.6 4.6L15 1.6"/></g></svg>
<svg class="ab" style="left:497.5px;top:322.5px" width="13" height="13" viewBox="-6.5 -6.5 13 13"><circle r="5.2" fill="none" stroke="#e4e4e4" stroke-width="1.1"/><circle r="2.6" fill="none" stroke="#e4e4e4" stroke-width="1.1"/><circle r="0.7" fill="#e4e4e4"/></svg>
<svg class="ab" style="left:496.2px;top:338.3px" width="16" height="6" viewBox="0 0 16 6"><g stroke="#e0e0e0" stroke-width="1.1" fill="none"><path d="M0.8 4.6L3.2 1.6L5.6 4.6"/><path d="M10.2 1.6L12.6 4.6L15 1.6"/></g></svg>
<svg class="ab" style="left:497.3px;top:347.7px" width="14" height="14" viewBox="-7 -7 14 14"><rect x="-4.70" y="-4.70" width="2.2" height="2.2" rx="0.5" fill="#e4e4e4"/><rect x="-1.10" y="-4.70" width="2.2" height="2.2" rx="0.5" fill="#e4e4e4"/><rect x="2.50" y="-4.70" width="2.2" height="2.2" rx="0.5" fill="#e4e4e4"/><rect x="-4.70" y="-1.10" width="2.2" height="2.2" rx="0.5" fill="#e4e4e4"/><rect x="-1.10" y="-1.10" width="2.2" height="2.2" rx="0.5" fill="#e4e4e4"/><rect x="2.50" y="-1.10" width="2.2" height="2.2" rx="0.5" fill="#e4e4e4"/><rect x="-4.70" y="2.50" width="2.2" height="2.2" rx="0.5" fill="#e4e4e4"/><rect x="-1.10" y="2.50" width="2.2" height="2.2" rx="0.5" fill="#e4e4e4"/><rect x="2.50" y="2.50" width="2.2" height="2.2" rx="0.5" fill="#e4e4e4"/></svg>
<div style="left:0px;top:362px;width:516px;height:151.6px;background:#3b3b3b;"></div>
<svg class="ab" style="left:4.6px;top:365.0px" width="12" height="12" viewBox="-6 -6 12 12"><circle r="3.9" fill="none" stroke="#e6e6e6" stroke-width="1"/><path d="M-3.9 0 A3.9 3.9 0 0 0 3.9 0Z" fill="#e6e6e6"/></svg>
<div class="t" style="left:-27.40px;top:361.25px;font-size:11.6px;color:#e6e6e6;font-weight:normal;font-family:'DejaVu Sans',sans-serif;">★</div>
<div style="left:1.4px;top:380.3px;width:41.7px;height:13.3px;background:#323232;"></div>
<div style="left:1.4px;top:397.2px;width:41.7px;height:13.3px;background:#323232;"></div>
<div class="t" style="left:-37.45px;top:393.75px;font-size:7.5px;color:#d8d8d8;letter-spacing:0.1px;">FLASH</div>
<div style="left:1.4px;top:413.7px;width:41.7px;height:14px;background:#323232;"></div>
<div style="left:36.0px;top:413.9px;width:7.6px;height:13.8px;background:#2b2b2b;border:1px solid #444;"></div>
<div style="left:38.9px;top:419.3px;width:1.9px;height:2.9px;background:#b8b8b8;"></div>
<div style="left:1.4px;top:432.3px;width:18.6px;height:10.6px;background:#000;"></div>
<div class="t" style="left:-49.30px;top:427.75px;font-size:6.4px;color:#e8e8e8;font-weight:normal;">HTP</div>
<div style="left:21.4px;top:432.3px;width:6.2px;height:10.6px;background:#000;"></div>
<div class="t" style="left:-35.50px;top:427.75px;font-size:6.4px;color:#e8e8e8;font-weight:normal;">K</div>
<div style="left:28.799999999999997px;top:432.3px;width:6.2px;height:10.6px;background:#000;"></div>
<div class="t" style="left:-28.10px;top:427.75px;font-size:6.4px;color:#e8e8e8;font-weight:normal;">E</div>
<div style="left:36.4px;top:432.3px;width:6.6px;height:10.6px;background:#000;"></div>
<div class="t" style="left:-20.30px;top:427.75px;font-size:6.4px;color:#e8e8e8;font-weight:normal;">S</div>
<div style="left:1.4px;top:449.1px;width:42.300000000000004px;height:11.4px;background:#d2d2d2;border:1px solid #222;"></div>
<div class="t" style="left:-34.35px;top:445.25px;font-size:8.6px;color:#2a2a2a;">0</div>
<div style="left:0.7999999999999999px;top:465.2px;width:43.1px;height:21.8px;background:#323232;border:1px solid #222;"></div>
<div style="left:0.7999999999999999px;top:489.5px;width:42.7px;height:19.8px;background:#323232;border:2px solid #1c1c1c;"></div>
<div class="t" style="left:-37.75px;top:489.75px;font-size:13.6px;color:#c8c8c8;">1</div>
<svg class="ab" style="left:49.55px;top:365.0px" width="12" height="12" viewBox="-6 -6 12 12"><circle r="3.9" fill="none" stroke="#e6e6e6" stroke-width="1"/><path d="M-3.9 0 A3.9 3.9 0 0 0 3.9 0Z" fill="#e6e6e6"/></svg>
<div class="t" style="left:17.55px;top:361.25px;font-size:11.6px;color:#e6e6e6;font-weight:normal;font-family:'DejaVu Sans',sans-serif;">★</div>
<div style="left:46.35px;top:380.3px;width:41.7px;height:13.3px;background:#323232;"></div>
<div style="left:46.35px;top:397.2px;width:41.7px;height:13.3px;background:#323232;"></div>
<div class="t" style="left:7.50px;top:393.75px;font-size:7.5px;color:#d8d8d8;letter-spacing:0.1px;">FLASH</div>
<div style="left:46.35px;top:413.7px;width:41.7px;height:14px;background:#323232;"></div>
<div style="left:80.95px;top:413.9px;width:7.6px;height:13.8px;background:#2b2b2b;border:1px solid #444;"></div>
<div style="left:83.85px;top:419.3px;width:1.9px;height:2.9px;background:#b8b8b8;"></div>
<div style="left:46.35px;top:432.3px;width:18.6px;height:10.6px;background:#000;"></div>
<div class="t" style="left:-4.35px;top:427.75px;font-size:6.4px;color:#e8e8e8;font-weight:normal;">HTP</div>
<div style="left:66.35px;top:432.3px;width:6.2px;height:10.6px;background:#000;"></div>
<div class="t" style="left:9.45px;top:427.75px;font-size:6.4px;color:#e8e8e8;font-weight:normal;">K</div>
<div style="left:73.75px;top:432.3px;width:6.2px;height:10.6px;background:#000;"></div>
<div class="t" style="left:16.85px;top:427.75px;font-size:6.4px;color:#e8e8e8;font-weight:normal;">E</div>
<div style="left:81.35px;top:432.3px;width:6.6px;height:10.6px;background:#000;"></div>
<div class="t" style="left:24.65px;top:427.75px;font-size:6.4px;color:#e8e8e8;font-weight:normal;">S</div>
<div style="left:46.35px;top:449.1px;width:42.300000000000004px;height:11.4px;background:#d2d2d2;border:1px solid #222;"></div>
<div class="t" style="left:10.60px;top:445.25px;font-size:8.6px;color:#2a2a2a;">0</div>
<div style="left:45.75px;top:465.2px;width:43.1px;height:21.8px;background:#323232;border:1px solid #222;"></div>
<div style="left:45.75px;top:489.5px;width:42.7px;height:19.8px;background:#323232;border:2px solid #1c1c1c;"></div>
<div class="t" style="left:7.20px;top:489.75px;font-size:13.6px;color:#c8c8c8;">2</div>
<svg class="ab" style="left:94.50000000000001px;top:365.0px" width="12" height="12" viewBox="-6 -6 12 12"><circle r="3.9" fill="none" stroke="#e6e6e6" stroke-width="1"/><path d="M-3.9 0 A3.9 3.9 0 0 0 3.9 0Z" fill="#e6e6e6"/></svg>
<div class="t" style="left:62.50px;top:361.25px;font-size:11.6px;color:#e6e6e6;font-weight:normal;font-family:'DejaVu Sans',sans-serif;">★</div>
<div style="left:91.30000000000001px;top:380.3px;width:41.7px;height:13.3px;background:#323232;"></div>
<div style="left:91.30000000000001px;top:397.2px;width:41.7px;height:13.3px;background:#323232;"></div>
<div class="t" style="left:52.45px;top:393.75px;font-size:7.5px;color:#d8d8d8;letter-spacing:0.1px;">FLASH</div>
<div style="left:91.30000000000001px;top:413.7px;width:41.7px;height:14px;background:#323232;"></div>
<div style="left:125.9px;top:413.9px;width:7.6px;height:13.8px;background:#2b2b2b;border:1px solid #444;"></div>
<div style="left:128.8px;top:419.3px;width:1.9px;height:2.9px;background:#b8b8b8;"></div>
<div style="left:91.30000000000001px;top:432.3px;width:18.6px;height:10.6px;background:#000;"></div>
<div class="t" style="left:40.60px;top:427.75px;font-size:6.4px;color:#e8e8e8;font-weight:normal;">HTP</div>
<div style="left:111.30000000000001px;top:432.3px;width:6.2px;height:10.6px;background:#000;"></div>
<div class="t" style="left:54.40px;top:427.75px;font-size:6.4px;color:#e8e8e8;font-weight:normal;">K</div>
<div style="left:118.70000000000002px;top:432.3px;width:6.2px;height:10.6px;background:#000;"></div>
<div class="t" style="left:61.80px;top:427.75px;font-size:6.4px;color:#e8e8e8;font-weight:normal;">E</div>
<div style="left:126.30000000000001px;top:432.3px;width:6.6px;height:10.6px;background:#000;"></div>
<div class="t" style="left:69.60px;top:427.75px;font-size:6.4px;color:#e8e8e8;font-weight:normal;">S</div>
<div style="left:91.30000000000001px;top:449.1px;width:42.300000000000004px;height:11.4px;background:#d2d2d2;border:1px solid #222;"></div>
<div class="t" style="left:55.55px;top:445.25px;font-size:8.6px;color:#2a2a2a;">0</div>
<div style="left:90.70000000000002px;top:465.2px;width:43.1px;height:21.8px;background:#323232;border:1px solid #222;"></div>
<div style="left:90.70000000000002px;top:489.5px;width:42.7px;height:19.8px;background:#323232;border:2px solid #1c1c1c;"></div>
<div class="t" style="left:52.15px;top:489.75px;font-size:13.6px;color:#c8c8c8;">3</div>
<svg class="ab" style="left:139.45000000000002px;top:365.0px" width="12" height="12" viewBox="-6 -6 12 12"><circle r="3.9" fill="none" stroke="#e6e6e6" stroke-width="1"/><path d="M-3.9 0 A3.9 3.9 0 0 0 3.9 0Z" fill="#e6e6e6"/></svg>
<div class="t" style="left:107.45px;top:361.25px;font-size:11.6px;color:#e6e6e6;font-weight:normal;font-family:'DejaVu Sans',sans-serif;">★</div>
<div style="left:136.25000000000003px;top:380.3px;width:41.7px;height:13.3px;background:#323232;"></div>
<div style="left:136.25000000000003px;top:397.2px;width:41.7px;height:13.3px;background:#323232;"></div>
<div class="t" style="left:97.40px;top:393.75px;font-size:7.5px;color:#d8d8d8;letter-spacing:0.1px;">FLASH</div>
<div style="left:136.25000000000003px;top:413.7px;width:41.7px;height:14px;background:#323232;"></div>
<div style="left:170.85000000000002px;top:413.9px;width:7.6px;height:13.8px;background:#2b2b2b;border:1px solid #444;"></div>
<div style="left:173.75000000000003px;top:419.3px;width:1.9px;height:2.9px;background:#b8b8b8;"></div>
<div style="left:136.25000000000003px;top:432.3px;width:18.6px;height:10.6px;background:#000;"></div>
<div class="t" style="left:85.55px;top:427.75px;font-size:6.4px;color:#e8e8e8;font-weight:normal;">HTP</div>
<div style="left:156.25000000000003px;top:432.3px;width:6.2px;height:10.6px;background:#000;"></div>
<div class="t" style="left:99.35px;top:427.75px;font-size:6.4px;color:#e8e8e8;font-weight:normal;">K</div>
<div style="left:163.65000000000003px;top:432.3px;width:6.2px;height:10.6px;background:#000;"></div>
<div class="t" style="left:106.75px;top:427.75px;font-size:6.4px;color:#e8e8e8;font-weight:normal;">E</div>
<div style="left:171.25000000000003px;top:432.3px;width:6.6px;height:10.6px;background:#000;"></div>
<div class="t" style="left:114.55px;top:427.75px;font-size:6.4px;color:#e8e8e8;font-weight:normal;">S</div>
<div style="left:136.25000000000003px;top:449.1px;width:42.300000000000004px;height:11.4px;background:#d2d2d2;border:1px solid #222;"></div>
<div class="t" style="left:100.50px;top:445.25px;font-size:8.6px;color:#2a2a2a;">0</div>
<div style="left:135.65000000000003px;top:465.2px;width:43.1px;height:21.8px;background:#323232;border:1px solid #222;"></div>
<div style="left:135.65000000000003px;top:489.5px;width:42.7px;height:19.8px;background:#323232;border:2px solid #1c1c1c;"></div>
<div class="t" style="left:97.10px;top:489.75px;font-size:13.6px;color:#c8c8c8;">4</div>
<svg class="ab" style="left:184.4px;top:365.0px" width="12" height="12" viewBox="-6 -6 12 12"><circle r="3.9" fill="none" stroke="#e6e6e6" stroke-width="1"/><path d="M-3.9 0 A3.9 3.9 0 0 0 3.9 0Z" fill="#e6e6e6"/></svg>
<div class="t" style="left:152.40px;top:361.25px;font-size:11.6px;color:#e6e6e6;font-weight:normal;font-family:'DejaVu Sans',sans-serif;">★</div>
<div style="left:181.20000000000002px;top:380.3px;width:41.7px;height:13.3px;background:#323232;"></div>
<div style="left:181.20000000000002px;top:397.2px;width:41.7px;height:13.3px;background:#323232;"></div>
<div class="t" style="left:142.35px;top:393.75px;font-size:7.5px;color:#d8d8d8;letter-spacing:0.1px;">FLASH</div>
<div style="left:181.20000000000002px;top:413.7px;width:41.7px;height:14px;background:#323232;"></div>
<div style="left:215.8px;top:413.9px;width:7.6px;height:13.8px;background:#2b2b2b;border:1px solid #444;"></div>
<div style="left:218.70000000000002px;top:419.3px;width:1.9px;height:2.9px;background:#b8b8b8;"></div>
<div style="left:181.20000000000002px;top:432.3px;width:18.6px;height:10.6px;background:#000;"></div>
<div class="t" style="left:130.50px;top:427.75px;font-size:6.4px;color:#e8e8e8;font-weight:normal;">HTP</div>
<div style="left:201.20000000000002px;top:432.3px;width:6.2px;height:10.6px;background:#000;"></div>
<div class="t" style="left:144.30px;top:427.75px;font-size:6.4px;color:#e8e8e8;font-weight:normal;">K</div>
<div style="left:208.60000000000002px;top:432.3px;width:6.2px;height:10.6px;background:#000;"></div>
<div class="t" style="left:151.70px;top:427.75px;font-size:6.4px;color:#e8e8e8;font-weight:normal;">E</div>
<div style="left:216.20000000000002px;top:432.3px;width:6.6px;height:10.6px;background:#000;"></div>
<div class="t" style="left:159.50px;top:427.75px;font-size:6.4px;color:#e8e8e8;font-weight:normal;">S</div>
<div style="left:181.20000000000002px;top:449.1px;width:42.300000000000004px;height:11.4px;background:#d2d2d2;border:1px solid #222;"></div>
<div class="t" style="left:145.45px;top:445.25px;font-size:8.6px;color:#2a2a2a;">0</div>
<div style="left:180.60000000000002px;top:465.2px;width:43.1px;height:21.8px;background:#323232;border:1px solid #222;"></div>
<div style="left:180.60000000000002px;top:489.5px;width:42.7px;height:19.8px;background:#323232;border:2px solid #1c1c1c;"></div>
<div class="t" style="left:142.05px;top:489.75px;font-size:13.6px;color:#c8c8c8;">5</div>
<svg class="ab" style="left:229.35px;top:365.0px" width="12" height="12" viewBox="-6 -6 12 12"><circle r="3.9" fill="none" stroke="#e6e6e6" stroke-width="1"/><path d="M-3.9 0 A3.9 3.9 0 0 0 3.9 0Z" fill="#e6e6e6"/></svg>
<div class="t" style="left:197.35px;top:361.25px;font-size:11.6px;color:#e6e6e6;font-weight:normal;font-family:'DejaVu Sans',sans-serif;">★</div>
<div style="left:226.15px;top:380.3px;width:41.7px;height:13.3px;background:#323232;"></div>
<div style="left:226.15px;top:397.2px;width:41.7px;height:13.3px;background:#323232;"></div>
<div class="t" style="left:187.30px;top:393.75px;font-size:7.5px;color:#d8d8d8;letter-spacing:0.1px;">FLASH</div>
<div style="left:226.15px;top:413.7px;width:41.7px;height:14px;background:#323232;"></div>
<div style="left:260.75px;top:413.9px;width:7.6px;height:13.8px;background:#2b2b2b;border:1px solid #444;"></div>
<div style="left:263.65px;top:419.3px;width:1.9px;height:2.9px;background:#b8b8b8;"></div>
<div style="left:226.15px;top:432.3px;width:18.6px;height:10.6px;background:#000;"></div>
<div class="t" style="left:175.45px;top:427.75px;font-size:6.4px;color:#e8e8e8;font-weight:normal;">HTP</div>
<div style="left:246.15px;top:432.3px;width:6.2px;height:10.6px;background:#000;"></div>
<div class="t" style="left:189.25px;top:427.75px;font-size:6.4px;color:#e8e8e8;font-weight:normal;">K</div>
<div style="left:253.55px;top:432.3px;width:6.2px;height:10.6px;background:#000;"></div>
<div class="t" style="left:196.65px;top:427.75px;font-size:6.4px;color:#e8e8e8;font-weight:normal;">E</div>
<div style="left:261.15px;top:432.3px;width:6.6px;height:10.6px;background:#000;"></div>
<div class="t" style="left:204.45px;top:427.75px;font-size:6.4px;color:#e8e8e8;font-weight:normal;">S</div>
<div style="left:226.15px;top:449.1px;width:42.300000000000004px;height:11.4px;background:#d2d2d2;border:1px solid #222;"></div>
<div class="t" style="left:190.40px;top:445.25px;font-size:8.6px;color:#2a2a2a;">0</div>
<div style="left:225.55px;top:465.2px;width:43.1px;height:21.8px;background:#323232;border:1px solid #222;"></div>
<div style="left:225.55px;top:489.5px;width:42.7px;height:19.8px;background:#323232;border:2px solid #1c1c1c;"></div>
<div class="t" style="left:187.00px;top:489.75px;font-size:13.6px;color:#c8c8c8;">6</div>
<svg class="ab" style="left:274.3px;top:365.0px" width="12" height="12" viewBox="-6 -6 12 12"><circle r="3.9" fill="none" stroke="#e6e6e6" stroke-width="1"/><path d="M-3.9 0 A3.9 3.9 0 0 0 3.9 0Z" fill="#e6e6e6"/></svg>
<div class="t" style="left:242.30px;top:361.25px;font-size:11.6px;color:#e6e6e6;font-weight:normal;font-family:'DejaVu Sans',sans-serif;">★</div>
<div style="left:271.1px;top:380.3px;width:41.7px;height:13.3px;background:#323232;"></div>
<div style="left:271.1px;top:397.2px;width:41.7px;height:13.3px;background:#323232;"></div>
<div class="t" style="left:232.25px;top:393.75px;font-size:7.5px;color:#d8d8d8;letter-spacing:0.1px;">FLASH</div>
<div style="left:271.1px;top:413.7px;width:41.7px;height:14px;background:#323232;"></div>
<div style="left:305.70000000000005px;top:413.9px;width:7.6px;height:13.8px;background:#2b2b2b;border:1px solid #444;"></div>
<div style="left:308.6px;top:419.3px;width:1.9px;height:2.9px;background:#b8b8b8;"></div>
<div style="left:271.1px;top:432.3px;width:18.6px;height:10.6px;background:#000;"></div>
<div class="t" style="left:220.40px;top:427.75px;font-size:6.4px;color:#e8e8e8;font-weight:normal;">HTP</div>
<div style="left:291.1px;top:432.3px;width:6.2px;height:10.6px;background:#000;"></div>
<div class="t" style="left:234.20px;top:427.75px;font-size:6.4px;color:#e8e8e8;font-weight:normal;">K</div>
<div style="left:298.5px;top:432.3px;width:6.2px;height:10.6px;background:#000;"></div>
<div class="t" style="left:241.60px;top:427.75px;font-size:6.4px;color:#e8e8e8;font-weight:normal;">E</div>
<div style="left:306.1px;top:432.3px;width:6.6px;height:10.6px;background:#000;"></div>
<div class="t" style="left:249.40px;top:427.75px;font-size:6.4px;color:#e8e8e8;font-weight:normal;">S</div>
<div style="left:271.1px;top:449.1px;width:42.300000000000004px;height:11.4px;background:#d2d2d2;border:1px solid #222;"></div>
<div class="t" style="left:235.35px;top:445.25px;font-size:8.6px;color:#2a2a2a;">0</div>
<div style="left:270.5px;top:465.2px;width:43.1px;height:21.8px;background:#323232;border:1px solid #222;"></div>
<div style="left:270.5px;top:489.5px;width:42.7px;height:19.8px;background:#323232;border:2px solid #1c1c1c;"></div>
<div class="t" style="left:231.95px;top:489.75px;font-size:13.6px;color:#c8c8c8;">7</div>
<svg class="ab" style="left:319.25px;top:365.0px" width="12" height="12" viewBox="-6 -6 12 12"><circle r="3.9" fill="none" stroke="#e6e6e6" stroke-width="1"/><path d="M-3.9 0 A3.9 3.9 0 0 0 3.9 0Z" fill="#e6e6e6"/></svg>
<div class="t" style="left:287.25px;top:361.25px;font-size:11.6px;color:#e6e6e6;font-weight:normal;font-family:'DejaVu Sans',sans-serif;">★</div>
<div style="left:316.05px;top:380.3px;width:41.7px;height:13.3px;background:#323232;"></div>
<div style="left:316.05px;top:397.2px;width:41.7px;height:13.3px;background:#323232;"></div>
<div class="t" style="left:277.20px;top:393.75px;font-size:7.5px;color:#d8d8d8;letter-spacing:0.1px;">FLASH</div>
<div style="left:316.05px;top:413.7px;width:41.7px;height:14px;background:#323232;"></div>
<div style="left:350.65000000000003px;top:413.9px;width:7.6px;height:13.8px;background:#2b2b2b;border:1px solid #444;"></div>
<div style="left:353.55px;top:419.3px;width:1.9px;height:2.9px;background:#b8b8b8;"></div>
<div style="left:316.05px;top:432.3px;width:18.6px;height:10.6px;background:#000;"></div>
<div class="t" style="left:265.35px;top:427.75px;font-size:6.4px;color:#e8e8e8;font-weight:normal;">HTP</div>
<div style="left:336.05px;top:432.3px;width:6.2px;height:10.6px;background:#000;"></div>
<div class="t" style="left:279.15px;top:427.75px;font-size:6.4px;color:#e8e8e8;font-weight:normal;">K</div>
<div style="left:343.45px;top:432.3px;width:6.2px;height:10.6px;background:#000;"></div>
<div class="t" style="left:286.55px;top:427.75px;font-size:6.4px;color:#e8e8e8;font-weight:normal;">E</div>
<div style="left:351.05px;top:432.3px;width:6.6px;height:10.6px;background:#000;"></div>
<div class="t" style="left:294.35px;top:427.75px;font-size:6.4px;color:#e8e8e8;font-weight:normal;">S</div>
<div style="left:316.05px;top:449.1px;width:42.300000000000004px;height:11.4px;background:#d2d2d2;border:1px solid #222;"></div>
<div class="t" style="left:280.30px;top:445.25px;font-size:8.6px;color:#2a2a2a;">0</div>
<div style="left:315.45px;top:465.2px;width:43.1px;height:21.8px;background:#323232;border:1px solid #222;"></div>
<div style="left:315.45px;top:489.5px;width:42.7px;height:19.8px;background:#323232;border:2px solid #1c1c1c;"></div>
<div class="t" style="left:276.90px;top:489.75px;font-size:13.6px;color:#c8c8c8;">8</div>
<div style="left:360.6px;top:364px;width:2.6px;height:147px;background:#cfcfcf;"></div>
<svg class="ab" style="left:369.2px;top:365.0px" width="12" height="12" viewBox="-6 -6 12 12"><circle r="3.9" fill="none" stroke="#e6e6e6" stroke-width="1"/><path d="M-3.9 0 A3.9 3.9 0 0 0 3.9 0Z" fill="#e6e6e6"/></svg>
<div class="t" style="left:337.20px;top:361.25px;font-size:11.6px;color:#e6e6e6;font-weight:normal;font-family:'DejaVu Sans',sans-serif;">★</div>
<div style="left:366px;top:380.3px;width:41.7px;height:13.3px;background:#323232;"></div>
<div style="left:366px;top:397.2px;width:41.7px;height:13.3px;background:#323232;"></div>
<div class="t" style="left:327.15px;top:393.75px;font-size:7.5px;color:#d8d8d8;letter-spacing:0.1px;">FLASH</div>
<div style="left:366px;top:413.7px;width:41.7px;height:14px;background:#323232;"></div>
<div style="left:400.6px;top:413.9px;width:7.6px;height:13.8px;background:#2b2b2b;border:1px solid #444;"></div>
<div style="left:403.5px;top:419.3px;width:1.9px;height:2.9px;background:#b8b8b8;"></div>
<div style="left:366px;top:432.3px;width:18.6px;height:10.6px;background:#000;"></div>
<div class="t" style="left:315.30px;top:427.75px;font-size:6.4px;color:#e8e8e8;font-weight:normal;">HTP</div>
<div style="left:386px;top:432.3px;width:6.2px;height:10.6px;background:#000;"></div>
<div class="t" style="left:329.10px;top:427.75px;font-size:6.4px;color:#e8e8e8;font-weight:normal;">K</div>
<div style="left:393.4px;top:432.3px;width:6.2px;height:10.6px;background:#000;"></div>
<div class="t" style="left:336.50px;top:427.75px;font-size:6.4px;color:#e8e8e8;font-weight:normal;">E</div>
<div style="left:401px;top:432.3px;width:6.6px;height:10.6px;background:#000;"></div>
<div class="t" style="left:344.30px;top:427.75px;font-size:6.4px;color:#e8e8e8;font-weight:normal;">S</div>
<div style="left:366px;top:449.1px;width:42.300000000000004px;height:11.4px;background:#d2d2d2;border:1px solid #222;"></div>
<div class="t" style="left:330.25px;top:445.25px;font-size:8.6px;color:#2a2a2a;">0</div>
<div style="left:365.4px;top:465.2px;width:43.1px;height:21.8px;background:#323232;border:1px solid #222;"></div>
<div style="left:365.4px;top:489.5px;width:42.7px;height:19.8px;background:#323232;border:2px solid #1c1c1c;"></div>
<div class="t" style="left:326.85px;top:489.75px;font-size:13.6px;color:#c8c8c8;">9</div>
<svg class="ab" style="left:413.8px;top:365.0px" width="12" height="12" viewBox="-6 -6 12 12"><circle r="3.9" fill="none" stroke="#e6e6e6" stroke-width="1"/><path d="M-3.9 0 A3.9 3.9 0 0 0 3.9 0Z" fill="#e6e6e6"/></svg>
<div class="t" style="left:381.80px;top:361.25px;font-size:11.6px;color:#e6e6e6;font-weight:normal;font-family:'DejaVu Sans',sans-serif;">★</div>
<div style="left:410.6px;top:380.3px;width:41.7px;height:13.3px;background:#323232;"></div>
<div style="left:410.6px;top:397.2px;width:41.7px;height:13.3px;background:#323232;"></div>
<div class="t" style="left:371.75px;top:393.75px;font-size:7.5px;color:#d8d8d8;letter-spacing:0.1px;">FLASH</div>
<div style="left:410.6px;top:413.7px;width:41.7px;height:14px;background:#323232;"></div>
<div style="left:445.20000000000005px;top:413.9px;width:7.6px;height:13.8px;background:#2b2b2b;border:1px solid #444;"></div>
<div style="left:448.1px;top:419.3px;width:1.9px;height:2.9px;background:#b8b8b8;"></div>
<div style="left:410.6px;top:432.3px;width:18.6px;height:10.6px;background:#000;"></div>
<div class="t" style="left:359.90px;top:427.75px;font-size:6.4px;color:#e8e8e8;font-weight:normal;">HTP</div>
<div style="left:430.6px;top:432.3px;width:6.2px;height:10.6px;background:#000;"></div>
<div class="t" style="left:373.70px;top:427.75px;font-size:6.4px;color:#e8e8e8;font-weight:normal;">K</div>
<div style="left:438.0px;top:432.3px;width:6.2px;height:10.6px;background:#000;"></div>
<div class="t" style="left:381.10px;top:427.75px;font-size:6.4px;color:#e8e8e8;font-weight:normal;">E</div>
<div style="left:445.6px;top:432.3px;width:6.6px;height:10.6px;background:#000;"></div>
<div class="t" style="left:388.90px;top:427.75px;font-size:6.4px;color:#e8e8e8;font-weight:normal;">S</div>
<div style="left:410.6px;top:449.1px;width:42.300000000000004px;height:11.4px;background:#d2d2d2;border:1px solid #222;"></div>
<div class="t" style="left:374.85px;top:445.25px;font-size:8.6px;color:#2a2a2a;">0</div>
<div style="left:410.0px;top:465.2px;width:43.1px;height:21.8px;background:#323232;border:1px solid #222;"></div>
<div style="left:410.0px;top:489.5px;width:42.7px;height:19.8px;background:#323232;border:2px solid #1c1c1c;"></div>
<div class="t" style="left:371.45px;top:489.75px;font-size:13.6px;color:#c8c8c8;">10</div>
<svg class="ab" style="left:479.2px;top:364.8px" width="12" height="12" viewBox="-6 -6 12 12"><circle r="3.9" fill="none" stroke="#e6e6e6" stroke-width="1"/><path d="M-3.9 0 A3.9 3.9 0 0 0 3.9 0Z" fill="#e6e6e6"/></svg>
<div style="left:457.1px;top:387.2px;width:28.4px;height:17.8px;background:#323232;"></div>
<div class="t" style="left:411.20px;top:386.25px;font-size:11.4px;color:#c4c4c4;">uM<span style="font-size:9px;font-weight:bold;font-family:'DejaVu Sans',sans-serif;color:#a8a8a8;position:relative;top:-0.7px">∞</span></div>
<div style="left:487.6px;top:387.2px;width:26.8px;height:17.8px;background:#323232;"></div>
<div class="t" style="left:441.00px;top:386.25px;font-size:11.4px;color:#c4c4c4;">rM<span style="font-size:9px;font-weight:bold;font-family:'DejaVu Sans',sans-serif;color:#a8a8a8;position:relative;top:-0.7px">∞</span></div>
<div style="left:457.1px;top:419.5px;width:13.3px;height:13.4px;background:#323232;border:1px solid #222;"></div>
<div style="left:471.3px;top:419.5px;width:28.4px;height:13.4px;background:#323232;border:1px solid #222;"></div>
<div style="left:500.6px;top:419.5px;width:13.3px;height:13.4px;background:#323232;border:1px solid #222;"></div>
<div class="t" style="left:425.60px;top:416.75px;font-size:7.6px;color:#ececec;">Pg 1</div>
<svg class="ab" style="left:457.6px;top:419.8px" width="56" height="12.8" viewBox="0 0 56 12.8"><g stroke="#e4e4e4" stroke-width="1.1" fill="none"><path d="M8.6 2.4L4.4 6.4L8.6 10.4"/><path d="M47.6 2.4L51.8 6.4L47.6 10.4"/></g></svg>
<div style="left:457.1px;top:442.0px;width:13.3px;height:13.4px;background:#323232;border:1px solid #222;"></div>
<div style="left:471.3px;top:442.0px;width:28.4px;height:13.4px;background:#323232;border:1px solid #222;"></div>
<div style="left:500.6px;top:442.0px;width:13.3px;height:13.4px;background:#323232;border:1px solid #222;"></div>
<div class="t" style="left:425.60px;top:438.75px;font-size:7.6px;color:#ececec;">Bk 1</div>
<svg class="ab" style="left:457.6px;top:442.3px" width="56" height="12.8" viewBox="0 0 56 12.8"><g stroke="#e4e4e4" stroke-width="1.1" fill="none"><path d="M8.6 2.4L4.4 6.4L8.6 10.4"/><path d="M47.6 2.4L51.8 6.4L47.6 10.4"/></g></svg>
<svg class="ab" style="left:478.3px;top:464.3px" width="14" height="14" viewBox="-7 -7 14 14"><rect x="-4.70" y="-4.70" width="2.2" height="2.2" rx="0.5" fill="#e4e4e4"/><rect x="-1.10" y="-4.70" width="2.2" height="2.2" rx="0.5" fill="#e4e4e4"/><rect x="2.50" y="-4.70" width="2.2" height="2.2" rx="0.5" fill="#e4e4e4"/><rect x="-4.70" y="-1.10" width="2.2" height="2.2" rx="0.5" fill="#e4e4e4"/><rect x="-1.10" y="-1.10" width="2.2" height="2.2" rx="0.5" fill="#e4e4e4"/><rect x="2.50" y="-1.10" width="2.2" height="2.2" rx="0.5" fill="#e4e4e4"/><rect x="-4.70" y="2.50" width="2.2" height="2.2" rx="0.5" fill="#e4e4e4"/><rect x="-1.10" y="2.50" width="2.2" height="2.2" rx="0.5" fill="#e4e4e4"/><rect x="2.50" y="2.50" width="2.2" height="2.2" rx="0.5" fill="#e4e4e4"/></svg>
<div style="left:457.6px;top:488px;width:56px;height:16.6px;background:#323232;"></div>
<div class="t" style="left:425.30px;top:487.25px;font-size:11.4px;color:#c4c4c4;">KILL</div>
<div class="t" style="left:-56.70px;top:511.75px;font-size:10px;color:#f4f4f4;font-weight:normal;">*</div>
</div>
<div style="left:518px;top:0;width:279.5px;height:529.2px;background:#333;border-radius:2px 5px 4px 4px;overflow:hidden;">
<div style="left:0px;top:0px;width:280px;height:20.5px;background:#f3f3f3;"></div>
<div style="left:0px;top:20px;width:280px;height:14.5px;background:#ffffff;"></div>
<svg class="ab" style="left:8px;top:3px" width="9" height="13" viewBox="0 0 9 13"><path d="M6.9 0.3C4.2 1.4 1.6 4.4 1.3 7.6C1.2 9 1.8 10 2.6 10.4C4.6 9.2 6.6 6.4 6.9 0.3Z" fill="#3f86dc" stroke="#1c3f86" stroke-width="0.8"/><path d="M2.9 9.2L5.8 3" stroke="#a9c9f2" stroke-width="0.7" fill="none"/><path d="M2.9 9.4L2.7 12.2" stroke="#101828" stroke-width="1.1" fill="none"/></svg>
<div class="tl" style="left:20.6px;top:0.25px;font-size:8.7px;color:#7c7c7c;font-weight:normal;letter-spacing:-0.3px;">Pad</div>
<svg class="ab" style="left:184px;top:0" width="96" height="20" viewBox="0 0 96 20"><g stroke="#5a5a5a" stroke-width="0.7" fill="none"><path d="M9 9.5h7"/><rect x="41.8" y="6" width="6.4" height="6.4" rx="0.8"/><path d="M75 6l7 7M82 6l-7 7"/></g></svg>
<div class="tl" style="left:6px;top:18.75px;font-size:8.2px;color:#4a4a4a;font-weight:normal;">File</div>
<div class="tl" style="left:28.5px;top:18.75px;font-size:8.2px;color:#4a4a4a;font-weight:normal;">Edit</div>
<div class="tl" style="left:53px;top:18.75px;font-size:8.2px;color:#4a4a4a;font-weight:normal;">Display</div>
<div class="tl" style="left:90px;top:18.75px;font-size:8.2px;color:#4a4a4a;font-weight:normal;">Devices</div>
<div class="tl" style="left:128px;top:18.75px;font-size:8.2px;color:#4a4a4a;font-weight:normal;">Utility</div>
<div class="tl" style="left:160px;top:18.75px;font-size:8.2px;color:#4a4a4a;font-weight:normal;">License</div>
<div style="left:2.7px;top:35px;width:32px;height:18px;background:#3a3a3a;"></div>
<div style="left:39px;top:35px;width:32px;height:18px;background:#3a3a3a;"></div>
<svg class="ab" style="left:2.7px;top:35px" width="70" height="18" viewBox="0 0 70 18"><g fill="#dcdcdc"><rect x="10" y="3.7" width="2.4" height="12"/><path d="M21.3 3.7V15.7L12.6 9.7Z"/><rect x="46.5" y="3" width="3.5" height="13.5"/><rect x="53.6" y="3" width="3.5" height="13.5"/></g></svg>
<div style="left:2.7px;top:54.4px;width:68.2px;height:32.2px;background:#686868;"></div>
<div class="t" style="left:-23.40px;top:61.25px;font-size:16.2px;color:#cdcdcd;">GO</div>
<div class="tl" style="left:4px;top:87.75px;font-size:13.8px;color:#dcdcdc;font-weight:normal;">00:00:26</div>
<div style="left:74px;top:35px;width:56px;height:19.4px;background:#3a3a3a;"></div>
<div class="t" style="left:42.00px;top:35.25px;font-size:11.4px;color:#d6d6d6;">Black</div>
<div style="left:74px;top:61.8px;width:56px;height:18.8px;background:#3a3a3a;"></div>
<div class="t" style="left:42.00px;top:61.25px;font-size:11.4px;color:#d6d6d6;">Freeze</div>
<div style="left:74px;top:87.2px;width:56px;height:18px;background:#3a3a3a;"></div>
<div class="t" style="left:42.00px;top:87.25px;font-size:11.4px;color:#d6d6d6;">Park</div>
<div class="tl" style="left:135px;top:33.75px;font-size:7.95px;color:#cdcdcd;letter-spacing:-0.18px;">Jan. 25, 2025 07:46:01</div>
<div class="tl" style="left:135px;top:43.75px;font-size:7.95px;color:#cdcdcd;letter-spacing:-0.15px;">D::Light 4.5.11</div>
<div class="tl" style="left:135px;top:53.75px;font-size:7.95px;color:#cdcdcd;">©Nicolas Bats (getdlight.com)</div>
<div class="tl" style="left:135px;top:63.75px;font-size:7.95px;color:#cdcdcd;">You cannot run D::Light on a virtual</div>
<div class="tl" style="left:135px;top:73.75px;font-size:7.95px;color:#cdcdcd;">System</div>
<div style="left:273px;top:38px;width:3.2px;height:65.5px;background:#484848;"></div>
<div style="left:2.4px;top:106.4px;width:276.2px;height:21.4px;background:#333;border:1px solid #9c9c9c;border-radius:1.5px;"></div>
<div style="left:250.8px;top:107.4px;width:26.8px;height:19.4px;background:#636363;"></div>
<svg class="ab" style="left:260px;top:112.4px" width="9" height="9" viewBox="0 0 9 9"><path d="M5.4 0.5H8V6.6H3.9V8.4L0.5 5.6L3.9 2.8V4.6H5.4Z" fill="none" stroke="#2a2a2a" stroke-width="0.9" stroke-linejoin="round"/></svg>
<div style="left:2.7px;top:128.5px;width:69px;height:400px;background:#303030;"></div>
<div style="left:15.5px;top:128.5px;width:56px;height:400px;background:#333;"></div>
<div class="t" style="left:-20.80px;top:125.75px;font-size:7.2px;color:#cecece;letter-spacing:0.2px;">JOYSTICK</div>
<div class="t" style="left:-20.80px;top:158.75px;font-size:13.5px;color:#d0d0d0;font-weight:normal;">50</div>
<div class="t" style="left:-20.80px;top:205.75px;font-size:6.9px;color:#cecece;letter-spacing:0px;">SCENE</div>
<div class="t" style="left:-20.80px;top:238.75px;font-size:13.5px;color:#d0d0d0;font-weight:normal;">FF</div>
<div class="t" style="left:-20.80px;top:286.75px;font-size:7.0px;color:#cecece;letter-spacing:0px;">ALL SUB</div>
<div class="t" style="left:-20.80px;top:318.75px;font-size:13.5px;color:#d0d0d0;font-weight:normal;">FF</div>
<div class="t" style="left:-20.80px;top:367.25px;font-size:7.1px;color:#cecece;letter-spacing:0.2px;">FLASH</div>
<div class="t" style="left:-20.80px;top:399.75px;font-size:13.5px;color:#d0d0d0;font-weight:normal;">FF</div>
<div class="t" style="left:-20.80px;top:447.25px;font-size:7.1px;color:#cecece;letter-spacing:0.1px;">MASTER</div>
<div class="t" style="left:-20.80px;top:479.75px;font-size:13.5px;color:#d0d0d0;font-weight:normal;">FF</div>
<div style="left:2.7px;top:207.6px;width:69px;height:1px;background:#3a3a3a;"></div>
<div style="left:2.7px;top:287.8px;width:69px;height:1px;background:#3a3a3a;"></div>
<div style="left:2.7px;top:367.8px;width:69px;height:1px;background:#3a3a3a;"></div>
<div style="left:2.7px;top:448.6px;width:69px;height:1px;background:#3a3a3a;"></div>
<div style="left:72px;top:128.4px;width:59px;height:401px;background:#3d3d3d;"></div>
<div style="left:72.8px;top:128.5px;width:58px;height:38.80000000000001px;background:#343434;"></div>
<div class="t" style="left:41.60px;top:137.25px;font-size:11.4px;color:#d8d8d8;">Record</div>
<div style="left:72.8px;top:168.3px;width:58px;height:39.0px;background:#343434;"></div>
<div class="t" style="left:42.00px;top:177.25px;font-size:11.4px;color:#d8d8d8;">Update</div>
<div style="left:72.8px;top:208.3px;width:58px;height:38.29999999999998px;background:#343434;"></div>
<div class="t" style="left:41.60px;top:217.25px;font-size:11.4px;color:#d8d8d8;">Overwrite</div>
<div style="left:72.8px;top:247.6px;width:58px;height:41.00000000000003px;background:#343434;"></div>
<div class="t" style="left:39.90px;top:248.25px;font-size:11.4px;color:#d8d8d8;">forceD<span style="font-size:9.6px;font-weight:bold;font-family:'DejaVu Sans',sans-serif;color:#a4a4a4;position:relative;top:-0.5px">∞</span></div>
<div class="t" style="left:40.40px;top:272.25px;font-size:5.9px;color:#d4d4d4;font-weight:normal;">use Ctrl for options</div>
<div style="left:72.8px;top:289.6px;width:58px;height:38.39999999999998px;background:#343434;"></div>
<div class="t" style="left:39.90px;top:288.25px;font-size:11.4px;color:#d8d8d8;">Recall</div>
<div class="t" style="left:40.40px;top:312.25px;font-size:5.9px;color:#d4d4d4;font-weight:normal;">use Ctrl for options</div>
<div style="left:72.8px;top:329px;width:58px;height:38.60000000000002px;background:#343434;"></div>
<div class="t" style="left:42.20px;top:338.25px;font-size:11.4px;color:#d8d8d8;">Sample</div>
<div style="left:72.8px;top:368.6px;width:58px;height:39.19999999999999px;background:#343434;"></div>
<div class="t" style="left:36.30px;top:378.25px;font-size:11.4px;color:#d8d8d8;">Step</div>
<svg class="ab" style="left:110.5px;top:382.3px" width="7" height="11" viewBox="0 0 7 11"><path d="M1.2 1L5.6 5.5L1.2 10" stroke="#dcdcdc" stroke-width="1.25" fill="none"/></svg>
<div style="left:72.8px;top:408.8px;width:58px;height:39.19999999999999px;background:#343434;"></div>
<div class="t" style="left:36.30px;top:418.25px;font-size:11.4px;color:#d8d8d8;">Cue</div>
<svg class="ab" style="left:109.6px;top:422.5px" width="7" height="11" viewBox="0 0 7 11"><path d="M1.2 1L5.6 5.5L1.2 10" stroke="#dcdcdc" stroke-width="1.25" fill="none"/></svg>
<div style="left:72.8px;top:449px;width:58px;height:39.19999999999999px;background:#343434;"></div>
<div class="t" style="left:36.10px;top:458.25px;font-size:11.4px;color:#d8d8d8;">Preset</div>
<svg class="ab" style="left:115.4px;top:462.7px" width="7" height="11" viewBox="0 0 7 11"><path d="M1.2 1L5.6 5.5L1.2 10" stroke="#dcdcdc" stroke-width="1.25" fill="none"/></svg>
<div style="left:72.8px;top:489.2px;width:58px;height:38.80000000000001px;background:#343434;"></div>
<div class="t" style="left:35.90px;top:498.25px;font-size:11.4px;color:#d8d8d8;">Midi 1</div>
<svg class="ab" style="left:113.9px;top:502.7px" width="7" height="11" viewBox="0 0 7 11"><path d="M1.2 1L5.6 5.5L1.2 10" stroke="#dcdcdc" stroke-width="1.25" fill="none"/></svg>
<div style="left:130.5px;top:128.4px;width:149.5px;height:400px;background:#3d3d3d;"></div>
<div style="left:131.3px;top:128.4px;width:48.3px;height:42.5px;background:#343434;"></div>
<div class="t" style="left:95.45px;top:139.25px;font-size:11.4px;color:#d6d6d6;">Balance</div>
<div style="left:180.6px;top:128.4px;width:48.7px;height:42.5px;background:#3e3e3e;"></div>
<svg class="ab" style="left:199.14999999999998px;top:143.36px" width="12" height="12" viewBox="-6 -6 12 12"><circle r="4.2" fill="none" stroke="#f0f0f0" stroke-width="1"/><path d="M-4.2 0 A4.2 4.2 0 0 0 4.2 0Z" fill="#f0f0f0"/></svg>
<div style="left:230.3px;top:128.4px;width:49.2px;height:42.5px;background:#343434;"></div>
<div class="t" style="left:194.90px;top:139.25px;font-size:11.4px;color:#d6d6d6;">Refresh</div>
<div style="left:131.3px;top:171.9px;width:48.3px;height:43.68px;background:#343434;"></div>
<div class="t" style="left:95.45px;top:184.25px;font-size:11.4px;color:#d6d6d6;">@</div>
<div style="left:180.6px;top:171.9px;width:48.7px;height:43.68px;background:#343434;"></div>
<div class="t" style="left:144.95px;top:184.25px;font-size:11.4px;color:#d6d6d6;">Thru</div>
<div style="left:230.3px;top:171.9px;width:49.2px;height:43.68px;background:#343434;"></div>
<div class="t" style="left:194.90px;top:184.25px;font-size:11.4px;color:#d6d6d6;">All</div>
<div style="left:131.3px;top:216.58px;width:48.3px;height:43.68px;background:#343434;"></div>
<div class="t" style="left:95.45px;top:229.25px;font-size:11.4px;color:#d6d6d6;">7</div>
<div style="left:180.6px;top:216.58px;width:48.7px;height:43.68px;background:#343434;"></div>
<div class="t" style="left:144.95px;top:229.25px;font-size:11.4px;color:#d6d6d6;">8</div>
<div style="left:230.3px;top:216.58px;width:49.2px;height:43.68px;background:#343434;"></div>
<div class="t" style="left:194.90px;top:229.25px;font-size:11.4px;color:#d6d6d6;">9</div>
<div style="left:131.3px;top:261.26px;width:48.3px;height:43.68px;background:#343434;"></div>
<div class="t" style="left:95.45px;top:273.25px;font-size:11.4px;color:#d6d6d6;">4</div>
<div style="left:180.6px;top:261.26px;width:48.7px;height:43.68px;background:#343434;"></div>
<div class="t" style="left:144.95px;top:273.25px;font-size:11.4px;color:#d6d6d6;">5</div>
<div style="left:230.3px;top:261.26px;width:49.2px;height:43.68px;background:#343434;"></div>
<div class="t" style="left:194.90px;top:273.25px;font-size:11.4px;color:#d6d6d6;">6</div>
<div style="left:131.3px;top:305.94px;width:48.3px;height:43.68px;background:#343434;"></div>
<div class="t" style="left:95.45px;top:318.25px;font-size:11.4px;color:#d6d6d6;">1</div>
<div style="left:180.6px;top:305.94px;width:48.7px;height:43.68px;background:#343434;"></div>
<div class="t" style="left:144.95px;top:318.25px;font-size:11.4px;color:#d6d6d6;">2</div>
<div style="left:230.3px;top:305.94px;width:49.2px;height:43.68px;background:#343434;"></div>
<div class="t" style="left:194.90px;top:318.25px;font-size:11.4px;color:#d6d6d6;">3</div>
<div style="left:131.3px;top:350.62px;width:48.3px;height:43.68px;background:#343434;"></div>
<div class="t" style="left:95.45px;top:363.25px;font-size:11.4px;color:#d6d6d6;">CH</div>
<div style="left:180.6px;top:350.62px;width:48.7px;height:43.68px;background:#343434;"></div>
<div class="t" style="left:144.95px;top:363.25px;font-size:11.4px;color:#d6d6d6;">0</div>
<div style="left:230.3px;top:350.62px;width:49.2px;height:43.68px;background:#343434;"></div>
<div class="t" style="left:194.90px;top:363.25px;font-size:11.4px;color:#d6d6d6;">Clear</div>
<div style="left:131.3px;top:395.3px;width:48.3px;height:43.68px;background:#343434;"></div>
<div class="t" style="left:95.45px;top:406.25px;font-size:11.4px;color:#d6d6d6;">+</div>
<div style="left:180.6px;top:395.3px;width:48.7px;height:43.68px;background:#343434;"></div>
<div class="t" style="left:144.95px;top:406.25px;font-size:11.4px;color:#d6d6d6;">•</div>
<div style="left:230.3px;top:395.3px;width:49.2px;height:43.68px;background:#343434;"></div>
<div class="t" style="left:194.90px;top:406.25px;font-size:11.4px;color:#d6d6d6;">−</div>
<div style="left:131.3px;top:439.98px;width:48.3px;height:43.68px;background:#343434;"></div>
<div class="t" style="left:95.45px;top:452.25px;font-size:11.4px;color:#d6d6d6;">Inv</div>
<div style="left:180.6px;top:439.98px;width:48.7px;height:43.68px;background:#343434;"></div>
<div class="t" style="left:144.95px;top:452.25px;font-size:11.4px;color:#d6d6d6;">Swap</div>
<div style="left:230.3px;top:439.98px;width:49.2px;height:43.68px;background:#343434;"></div>
<div class="t" style="left:194.90px;top:452.25px;font-size:11.4px;color:#d6d6d6;">Clone</div>
<div style="left:131.3px;top:484.66px;width:48.3px;height:43.68px;background:#343434;"></div>
<div class="t" style="left:95.45px;top:497.25px;font-size:11.4px;color:#d6d6d6;">-%</div>
<div style="left:180.6px;top:484.66px;width:48.7px;height:43.68px;background:#3e3e3e;"></div>
<div style="left:230.3px;top:484.66px;width:49.2px;height:43.68px;background:#343434;"></div>
<div class="t" style="left:194.90px;top:497.25px;font-size:11.4px;color:#d6d6d6;">+%</div>
<div style="left:181px;top:497.6px;width:48.6px;height:18.2px;background:#1a1a1a;border:1px solid #0c0c0c;border-radius:2px;"></div>
<div class="tl" style="left:185.5px;top:496.75px;font-size:7.6px;color:#f0f0f0;font-weight:normal;font-family:'DejaVu Sans',sans-serif;">5</div>
<div style="left:220.4px;top:499.6px;width:7px;height:6.4px;background:#cfcfcf;"></div>
<div style="left:220.4px;top:507.4px;width:7px;height:6.4px;background:#cfcfcf;"></div>
<svg class="ab" style="left:220.4px;top:499.6px" width="7" height="14.2" viewBox="0 0 7 14.2"><path d="M1.2 5L3.5 1.6L5.8 5Z M1.2 9.2L3.5 12.6L5.8 9.2Z" fill="#333"/></svg>
</div>
<div style="left:517px;top:0px;width:1.6px;height:530px;background:linear-gradient(180deg,#b4b4b4 0,#a4a4a4 30px,#969390 300px,#8a857f 530px);"></div>
<div style="left:213.5px;top:226px;width:102.5px;height:120px;background:#db7093;border-radius:5px;overflow:hidden;box-shadow:0 0 0 0.6px rgba(120,90,100,.7);">
<div style="left:0px;top:0px;width:103px;height:21.8px;background:#f5eff1;"></div>
<svg class="ab" style="left:6.5px;top:4px" width="9" height="13" viewBox="0 0 9 13"><path d="M6.9 0.3C4.2 1.4 1.6 4.4 1.3 7.6C1.2 9 1.8 10 2.6 10.4C4.6 9.2 6.6 6.4 6.9 0.3Z" fill="#3f86dc" stroke="#1c3f86" stroke-width="0.8"/><path d="M2.9 9.2L5.8 3" stroke="#a9c9f2" stroke-width="0.7" fill="none"/><path d="M2.9 9.4L2.7 12.2" stroke="#101828" stroke-width="1.1" fill="none"/></svg>
<div class="tl" style="left:21.3px;top:1.25px;font-size:8.5px;color:#2a2a2a;font-weight:normal;">Warning</div>
<svg class="ab" style="left:84px;top:5px" width="12" height="12" viewBox="0 0 12 12"><path d="M2.6 2.6l6.4 6.4M9 2.6l-6.4 6.4" stroke="#333" stroke-width="0.8"/></svg>
<div class="t" style="left:-8.80px;top:47.25px;font-size:10.95px;color:#fff2f6;">Bad File format !!</div>
<div style="left:0px;top:93.6px;width:103px;height:1px;background:#4a3a40;"></div>
<div style="left:55px;top:99.2px;width:44.6px;height:18px;background:#222;border:1px solid #5a5a5a;"></div>
<div class="t" style="left:17.40px;top:99.25px;font-size:9.0px;color:#f4f4f4;font-weight:normal;">OK</div>
</div>
</body></html>
